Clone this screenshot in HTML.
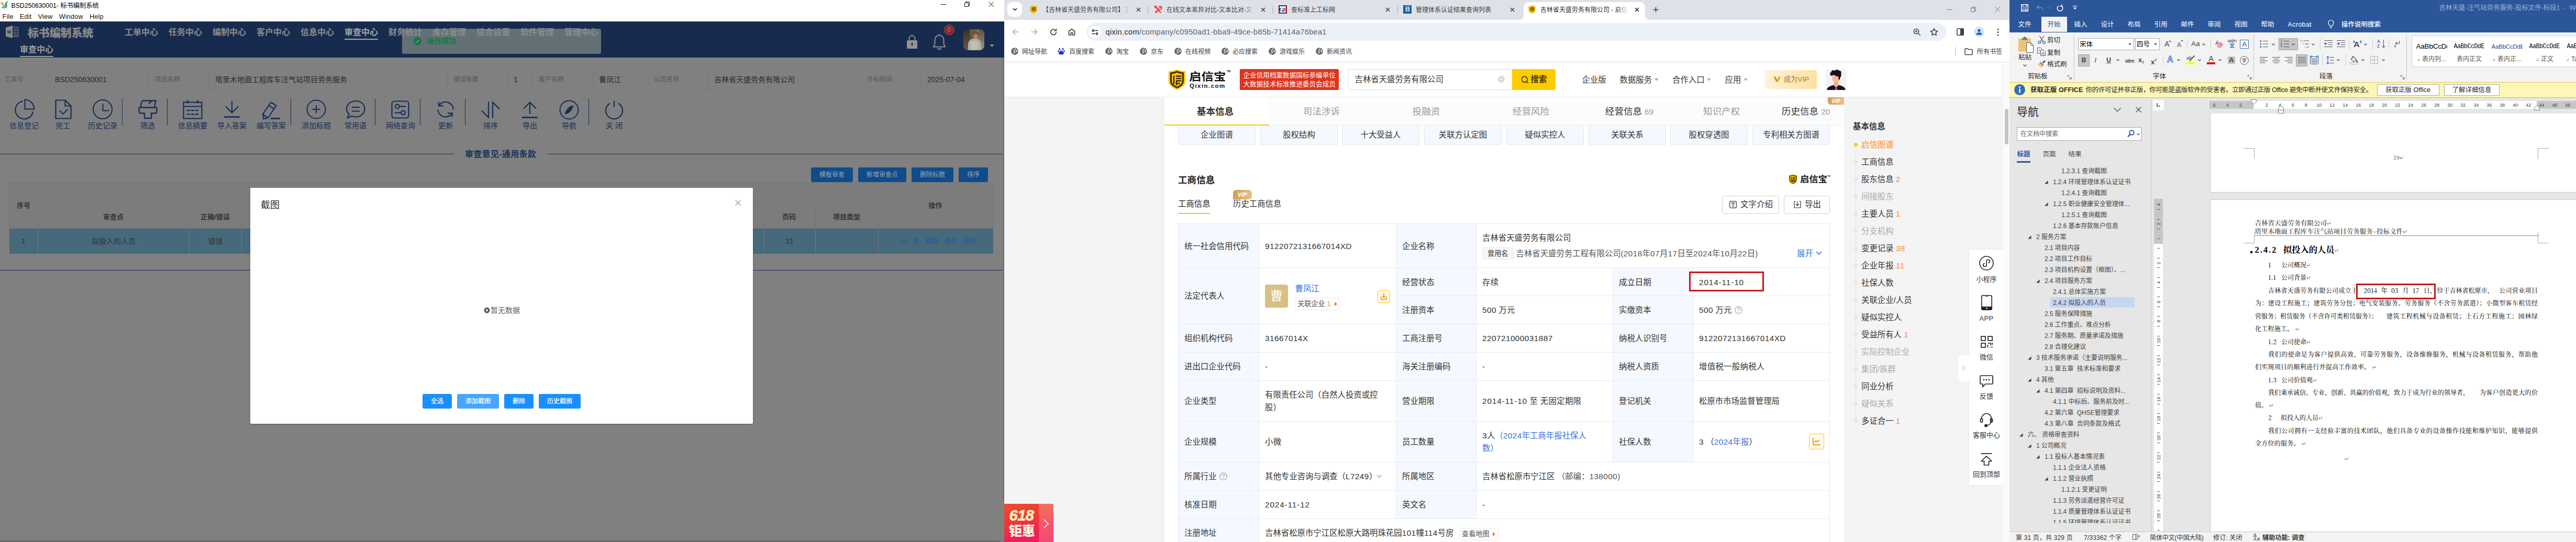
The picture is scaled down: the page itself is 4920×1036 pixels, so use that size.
<!DOCTYPE html>
<html lang="zh-CN">
<head>
<meta charset="utf-8">
<title>screen</title>
<style>
*{box-sizing:border-box;margin:0;padding:0}
html,body{width:4920px;height:1036px;overflow:hidden;background:#fff}
body{position:relative;font-family:"Liberation Sans","Noto Sans CJK SC",sans-serif;font-size:12px;color:#000}
.a{position:absolute}
.t{position:absolute;white-space:nowrap;line-height:1}
.c{text-align:center}
.b{font-weight:bold}
svg{position:absolute;overflow:visible}
/* ---- left app ---- */
.nv{position:absolute;top:53px;font-size:16px;font-weight:bold;color:#8c8c8c;line-height:18px;white-space:nowrap}
.ic{position:absolute;top:231px;width:80px;text-align:center;font-size:14px;line-height:18px;color:#172e58;white-space:nowrap}
.sp{position:absolute;top:189px;width:1px;height:50px;background:#172e58}
.il{position:absolute;top:131px;height:42px;line-height:42px;font-size:12px;color:#555;padding-left:9px;border-right:1px solid #777;white-space:nowrap}
.iv{position:absolute;top:131px;height:42px;line-height:42px;font-size:14px;color:#2a2a2a;padding-left:11px;border-right:1px solid #777;white-space:nowrap}
.bt{position:absolute;top:320px;height:28px;line-height:28px;border-radius:3px;background:#0e4c8c;color:#9aa4b0;font-size:12px;text-align:center;white-space:nowrap}
.th{position:absolute;font-size:13px;font-weight:bold;color:#333;text-align:center;white-space:nowrap}
.td{position:absolute;top:437px;height:48px;line-height:48px;font-size:14px;color:#313136;text-align:center;white-space:nowrap;background:#466a7b;border-right:1px solid #777}
.mb{position:absolute;top:753px;font-weight:500;height:28px;line-height:28px;border-radius:3px;background:#1890ff;color:#fff;font-size:12px;text-align:center;white-space:nowrap}
/* ---- browser ---- */
.tb{position:absolute;top:11px;font-size:12px;line-height:16px;color:#3c4043;white-space:nowrap;overflow:hidden}
.tx{position:absolute;top:13.500px}
.bk{position:absolute;top:91px;font-size:12px;line-height:16px;color:#3c4043;white-space:nowrap}
.gl{position:absolute;top:91px}
/* ---- page ---- */
.nl{position:absolute;top:142px;font-size:15.400px;line-height:22px;color:#333;white-space:nowrap}
.pt{position:absolute;top:199px;font-size:17.600px;line-height:28px;color:#999;white-space:nowrap;text-align:center;width:200px}
.pt i{font-style:normal;font-size:15.400px;color:#999}
.sb{position:absolute;top:240px;width:148px;height:37px;background:#f5f9ff;border:1px solid #dfe8f3;border-top:0;border-radius:0 0 4px 4px;font-size:15.400px;line-height:36.500px;color:#333;text-align:center;white-space:nowrap}
.cl{position:absolute;background:#f5f9ff;font-size:15.400px;color:#333;white-space:nowrap;padding-left:11px;border-right:1px solid #e3ebf5;border-bottom:1px solid #e3ebf5}
.cv{position:absolute;background:#fff;font-size:15.400px;color:#333;white-space:nowrap;padding-left:11px;border-right:1px solid #e3ebf5;border-bottom:1px solid #e3ebf5;letter-spacing:.3px}
.h54{height:54px;line-height:53px}
.si{position:absolute;left:3555px;margin-top:.5px;font-size:15.400px;line-height:22px;color:#333;white-space:nowrap}
.si b{font-weight:normal;color:#ff8a1f}
.si.g{color:#aaa}
.dt{position:absolute;left:3541px;width:7px;height:7px;border-radius:4px;background:#e6e6e6}
.fl{position:absolute;left:3761px;width:66px;text-align:center;font-size:13px;line-height:16px;color:#333;white-space:nowrap}
.n{letter-spacing:.42px}
.nd{letter-spacing:.84px}
.bl{color:#3870e0}
.tg{display:inline-block;height:23px;line-height:21px;border:1px solid #e8e8e8;border-radius:2px;font-size:13.200px;color:#555;padding:0 9px;vertical-align:middle;background:#fff}
/* ---- word ---- */
.wt{position:absolute;top:37.500px;font-size:12.500px;line-height:18px;color:#fff;white-space:nowrap}
.wl{position:absolute;font-size:12px;line-height:16px;color:#262626;white-space:nowrap}
.ws{position:absolute;top:66px;width:1px;height:86px;background:#c8c8c8}
.ws2{position:absolute;width:1px;height:22px;background:#d0d0d0}
.cr{position:absolute}
.nt{position:absolute;font-size:12px;line-height:16px;color:#444;white-space:nowrap;letter-spacing:-.1px}
.tr{position:absolute}
.dl{position:absolute;font-family:"Noto Serif CJK SC","Liberation Serif",serif;font-size:12px;line-height:16px;color:#000;white-space:nowrap}
.dj{position:absolute;left:4307px;width:540px;font-family:"Noto Serif CJK SC","Liberation Serif",serif;font-size:12px;line-height:16px;color:#000;text-align:justify;text-align-last:justify;white-space:nowrap}
.pm{color:#8a8a8a;font-family:"DejaVu Sans","Liberation Sans",sans-serif;font-size:11px;line-height:1;letter-spacing:0}
.rn{position:absolute;top:194.500px;font-size:9px;line-height:12px;color:#444;width:20px;text-align:center;font-family:"Liberation Sans",sans-serif}
.vr{position:absolute;left:4115px;width:16px;height:12px;font-size:9px;line-height:12px;color:#444;text-align:center;transform:rotate(-90deg);font-family:"Liberation Sans",sans-serif}
.st{position:absolute;top:1020px;letter-spacing:.15px;font-size:12px;line-height:16px;color:#333;white-space:nowrap}
.sg{position:absolute;top:81px;font-size:12px;line-height:16px;color:#000;white-space:nowrap;overflow:hidden;width:59px}
.sgl{position:absolute;top:105px;font-size:12px;line-height:16px;color:#555;white-space:nowrap;width:72px;text-align:center}
</style>
</head>
<body>
<!-- ================= LEFT APP ================= -->
<div class="a" style="left:0;top:0;width:1918px;height:1036px;background:#808080"></div>
<div class="a" style="left:0;top:0;width:1918px;height:41px;background:#fff"></div>
<svg style="left:0;top:2px" width="17" height="16" viewBox="0 0 17 16"><path d="M0 3.500C2 2 5.500 2.200 8 4 5.500 4 3 4.800 1 6.200 2.500 5 3 4.200 0 3.500z" fill="#f08a24"/><path d="M15.500 0c-2 .8-4.500 1.800-5.700 4.200C8.500 7 10.500 8 9.500 10.500c-.8 2-3.500 2.800-7.500 1.300 2.800 2.700 8.500 3 11-.3 1.800-2.500-.3-4 .2-6.500C13.600 3 14.800 1.500 15.500 0z" fill="#2e9e4e"/><path d="M3 6.500c2.500-.8 4.500.3 4.500 2.500 0 1.500-1.300 2.300-3 2.300" fill="none" stroke="#2e9e4e" stroke-width="1.600"/></svg>
<div class="t" style="left:21.500px;top:2.500px;font-size:12.300px;line-height:16px;letter-spacing:-.05px">BSD250630001- 标书编制系统</div>
<div class="t" style="left:4.500px;top:24px;font-size:12.500px;line-height:16px;color:#111;word-spacing:8.500px;letter-spacing:.25px">File Edit View Window Help</div>
<svg style="left:1797px;top:3px" width="110" height="12" viewBox="0 0 110 12"><path d="M0 5.500h10M45.500 2.500h7v7h-7zM47.500 2.500v-2h7v7h-2M91.500.5l9.500 9.500M101 .5l-9.500 9.500" fill="none" stroke="#111" stroke-width="1"/></svg>
<!-- navy header -->
<div class="a" style="left:0;top:41px;width:1918px;height:69px;background:#172b4f"></div>
<svg style="left:10px;top:49px" width="26" height="24" viewBox="0 0 26 24"><path d="M1 3.500L14 0v24L1 20.500z" fill="#8a8a8a"/><path d="M14 3h10.500v18H14" fill="none" stroke="#8a8a8a" stroke-width="1.200"/><path d="M15.500 6.500h7M15.500 9.500h7M15.500 12.500h7M15.500 15.500h7M15.500 18.500h7" stroke="#8a8a8a" stroke-width="1"/></svg>
<div class="t b" style="left:8.500px;top:57px;width:18px;font-size:8.500px;color:#172b4f;text-align:center">W</div>
<div class="t b" style="left:53px;top:50px;font-size:21px;line-height:26px;color:#8a8a8a;letter-spacing:-.15px;text-shadow:0 0 1px #8a8a8a">标书编制系统</div>
<div class="nv" style="left:238px">工单中心</div>
<div class="nv" style="left:322px">任务中心</div>
<div class="nv" style="left:406px">编制中心</div>
<div class="nv" style="left:490px">客户中心</div>
<div class="nv" style="left:574px">信息中心</div>
<div class="nv" style="left:658px;color:#a4a4a4">审查中心</div>
<div class="a" style="left:658px;top:74px;width:64px;height:2px;background:#a4a4a4"></div>
<div class="nv" style="left:742px">财务统计</div>
<div class="nv" style="left:826px">库存管理</div>
<div class="nv" style="left:910px">综合设置</div>
<div class="nv" style="left:994px">软件管理</div>
<div class="nv" style="left:1078px">管理中心</div>
<div class="nv" style="left:38px;top:86px;color:#9c9c9c">审查中心</div>
<div class="a" style="left:38px;top:107px;width:64px;height:2px;background:#9c9c9c"></div>
<!-- toast -->
<div class="a" style="left:768px;top:54.500px;width:380px;height:48px;border-radius:4px;background:rgba(132,142,135,.7)"></div>
<svg style="left:790px;top:71px" width="15" height="15" viewBox="0 0 15 15"><circle cx="7.500" cy="7.500" r="7.500" fill="#12773f"/><path d="M4 7.700l2.500 2.500L11 5.500" fill="none" stroke="#8a9a8c" stroke-width="1.600"/></svg>
<div class="t b" style="left:815px;top:71px;font-size:14px;line-height:15px;color:#167a44">操作成功</div>
<!-- header right icons -->
<svg style="left:1731px;top:66px" width="22" height="28" viewBox="0 0 22 28"><path d="M5.500 11V7.500a5.500 5.500 0 0111 0V11" fill="none" stroke="#8c8c8c" stroke-width="2"/><rect x="1" y="11" width="20" height="16" rx="2" fill="#929292"/><circle cx="11" cy="17.500" r="1.800" fill="#172b4f"/><rect x="10.300" y="18" width="1.400" height="4" fill="#172b4f"/></svg>
<svg style="left:1780px;top:64px" width="28" height="32" viewBox="0 0 28 32"><path d="M14 3.500c-5 0-8.500 3.800-8.500 9v8L2.500 25.500h23L22.500 20.500v-8c0-5.200-3.500-9-8.500-9z" fill="none" stroke="#8c8c8c" stroke-width="2" stroke-linejoin="round"/><path d="M11 27.500a3 3 0 006 0" fill="none" stroke="#8c8c8c" stroke-width="2"/><path d="M14 1v2.500" stroke="#8c8c8c" stroke-width="2"/></svg>
<div class="a" style="left:1802.500px;top:46.500px;width:20px;height:20px;border-radius:10px;background:#8c2428;border:1px solid #7a5a60"></div>
<div class="t c" style="left:1802.500px;top:49.500px;width:20px;font-size:12px;color:#a09090;line-height:14px">0</div>
<div class="a" style="left:1840px;top:56px;width:40px;height:40px;border-radius:9px;background:linear-gradient(90deg,#4a3d2c 0%,#5d5140 30%,#6f6656 60%,#8a8272 100%);overflow:hidden"><div class="a" style="left:0;top:0;width:12px;height:40px;background:linear-gradient(180deg,#3a2f22,#6a5a44)"></div><div class="a" style="left:30px;top:0;width:10px;height:40px;background:linear-gradient(180deg,#5a5548,#9a9484)"></div><div class="a" style="left:15px;top:3px;width:15px;height:15px;border-radius:8px;background:#7a4f30"></div><div class="a" style="left:19px;top:9px;width:9px;height:10px;border-radius:5px;background:#a38573"></div><div class="a" style="left:9px;top:18px;width:25px;height:24px;border-radius:10px 10px 2px 2px;background:#b3aea2"></div><div class="a" style="left:14px;top:22px;width:14px;height:18px;border-radius:6px;background:#c2beb3"></div></div>
<svg style="left:1890px;top:85px" width="9" height="5" viewBox="0 0 9 5"><path d="M0 0h9L4.500 5z" fill="#8c8c8c"/></svg>
<!-- info row -->
<div class="a" style="left:0;top:130px;width:1916px;height:43px;border-top:1px solid #777;border-bottom:1px solid #777"></div>
<div class="il" style="left:0;width:94px">工单号</div>
<div class="iv" style="left:94px;width:191px">BSD250630001</div>
<div class="il" style="left:285px;width:115px;padding-left:11px">项目名称</div>
<div class="iv" style="left:400px;width:455px">塔里木地面工程库车注气站项目劳务服务</div>
<div class="il" style="left:855px;width:115px;padding-left:11px">错误条数</div>
<div class="iv" style="left:970px;width:48px">1</div>
<div class="il" style="left:1018px;width:115px;padding-left:11px">客户名称</div>
<div class="iv" style="left:1133px;width:105px">曹凤江</div>
<div class="il" style="left:1238px;width:115px;padding-left:11px">公司名称</div>
<div class="iv" style="left:1353px;width:292px">吉林省天盛劳务有限公司</div>
<div class="il" style="left:1645px;width:115px;padding-left:11px">开标时间</div>
<div class="iv" style="left:1760px;width:156px">2025-07-04</div>
<!-- toolbar icons -->

<svg style="left:26px;top:188px" width="40" height="42" viewBox="0 0 40 42" fill="none" stroke="#172e58" stroke-width="2.200"><path d="M18 5.500A17 17 0 1037 25.500"/><path d="M21.500 2.500v18h17.500A17.500 17.500 0 0021.500 2.500z" stroke-linejoin="miter"/></svg>
<div class="ic" style="left:6px">信息登记</div>
<svg style="left:105px;top:190px" width="32" height="38" viewBox="0 0 32 38" fill="none" stroke="#172e58" stroke-width="2.200"><path d="M1.500 1.500h18l11 11v24h-29z"/><path d="M19.500 1.500v11h11"/><path d="M9 21.500l6.500 6.500 8.500-9"/></svg>
<div class="ic" style="left:80px">完工</div>
<svg style="left:177px;top:190px" width="38" height="38" viewBox="0 0 38 38" fill="none" stroke="#172e58" stroke-width="2"><circle cx="19" cy="19" r="18"/><path d="M19.500 8v13.500h12"/></svg>
<div class="ic" style="left:156px">历史记录</div>
<div class="sp" style="left:233px"></div>
<svg style="left:263px;top:191px" width="38" height="37" viewBox="0 0 38 37" fill="none" stroke="#172e58" stroke-width="2.400" stroke-linejoin="round"><path d="M6 14c0-6 1.500-11.500 4-12.500h25c-1.500 2-2.500 7-2.500 12.500"/><path d="M21 7.500l5.500-5.500"/><path d="M3 14.500h32c1 0 1.500.5 1.500 1.500v5.500c0 2.500-1.500 4-4 4h-6.500v9.500h-13v-9.500h-6.500c-2.500 0-4-1.500-4-4V16c0-1 .5-1.500 1.500-1.500z"/></svg>
<div class="ic" style="left:242px">筛选</div>
<div class="sp" style="left:319px"></div>
<svg style="left:349px;top:190px" width="38" height="38" viewBox="0 0 38 38" fill="none" stroke="#172e58" stroke-width="2.200"><rect x="1.500" y="5.500" width="35" height="31"/><path d="M1.500 13.500h35M9.500 1v7M28.500 1v7"/><path d="M9 21h4M17 21h4M25 21h4M9 28.500h4M17 28.500h4M25 28.500h4" stroke-width="2.600" stroke-linecap="round"/></svg>
<div class="ic" style="left:328px">信息摘要</div>
<svg style="left:427px;top:192px" width="32" height="34" viewBox="0 0 32 34" fill="none" stroke="#172e58" stroke-width="2.200"><path d="M16 1v22M4 11.500l12 12 12-12"/><path d="M1 31.500h30" stroke-width="2.800"/></svg>
<div class="ic" style="left:403px">导入答案</div>
<svg style="left:500px;top:193px" width="36" height="36" viewBox="0 0 36 36" fill="none" stroke="#172e58" stroke-width="2.200" stroke-linejoin="round"><path d="M17.500 2.500l10 6.500-15.500 23-9 2.500-1-9.500z"/><path d="M13.500 8.500l10 6.500M2.500 26l8.500 6"/><path d="M17 33.500h18" stroke-width="2.800"/></svg>
<div class="ic" style="left:478px">编写答案</div>
<div class="sp" style="left:555px"></div>
<svg style="left:585px;top:190px" width="38" height="38" viewBox="0 0 38 38" fill="none" stroke="#172e58" stroke-width="2"><circle cx="19" cy="19" r="17.500"/><path d="M19 11.500v15M11.500 19h15" stroke-width="2.200"/></svg>
<div class="ic" style="left:564px">添加标题</div>
<svg style="left:660px;top:191px" width="38" height="37" viewBox="0 0 38 37" fill="none" stroke="#172e58" stroke-width="2.200" stroke-linejoin="round"><path d="M19.500 2C10 2 2 8.500 2 17c0 4 1.800 7.500 4.600 10.200L3.500 34.500l8.500-3.400c2.300.9 4.800 1.400 7.500 1.400 9.500 0 17-6.800 17-15.500S29 2 19.500 2z"/><path d="M12 14h15M12 21.500h15"/></svg>
<div class="ic" style="left:639px">常用语</div>
<div class="sp" style="left:716px"></div>
<svg style="left:747px;top:192px" width="35" height="35" viewBox="0 0 35 35" fill="none" stroke="#172e58" stroke-width="2.200"><rect x="1.500" y="1.500" width="32" height="32" rx="4.500"/><circle cx="12" cy="11.500" r="3.800"/><path d="M16 11.500h12"/><circle cx="23" cy="23.500" r="3.800"/><path d="M7 23.500h12"/></svg>
<div class="ic" style="left:725px">网络查询</div>
<div class="sp" style="left:802px"></div>
<svg style="left:834px;top:192px" width="34" height="34" viewBox="0 0 34 34" fill="none" stroke="#172e58" stroke-width="2.200"><path d="M4 10.400A15 15 0 0132 17.400"/><path d="M4 2.600v7.800h8.600"/><path d="M2 17.400A15 15 0 0029.700 24.400"/><path d="M29.700 32V24.400h-8.700"/></svg>
<div class="ic" style="left:811px">更新</div>
<div class="sp" style="left:888px"></div>
<svg style="left:919px;top:193px" width="36" height="34" viewBox="0 0 36 34" fill="none" stroke="#172e58" stroke-width="2.200"><path d="M14 1.500v30L1 18.500"/><path d="M22 32.500v-30l13 13"/></svg>
<div class="ic" style="left:897px">排序</div>
<svg style="left:996px;top:194px" width="32" height="33" viewBox="0 0 32 33" fill="none" stroke="#172e58" stroke-width="2.200"><path d="M16 24V2M4 13.500l12-12 12 12"/><path d="M1 30.500h30" stroke-width="2.800"/></svg>
<div class="ic" style="left:972px">导出</div>
<svg style="left:1068px;top:191px" width="38" height="38" viewBox="0 0 38 38" fill="none" stroke="#172e58" stroke-width="2"><circle cx="19" cy="19" r="17.500"/><path d="M27.500 10.500c-1 5-4.500 10.500-8 13.500-3 2.200-6.500 3-9 3.500 1-5 4.500-10.500 8-13.500 3-2.200 6.500-3 9-3.500z" fill="#172e58" stroke="none"/></svg>
<div class="ic" style="left:1047px">导航</div>
<div class="sp" style="left:1124px"></div>
<svg style="left:1155px;top:192px" width="36" height="34" viewBox="0 0 36 34" fill="none" stroke="#172e58" stroke-width="2.200"><path d="M10 5.500A16 16 0 1026 5.500"/><path d="M18 1v11.500"/></svg>
<div class="ic" style="left:1133px">关 闭</div>

<!-- divider -->
<div class="a" style="left:0;top:294px;width:868px;height:1px;background:#1d3760"></div>
<div class="a" style="left:1046px;top:294px;width:870px;height:1px;background:#1d3760"></div>
<div class="t b" style="left:888px;top:285px;font-size:16px;line-height:20px;color:#17305a;letter-spacing:.3px">审查意见-通用条款</div>
<!-- buttons -->
<div class="bt" style="left:1549px;width:80px">模板审查</div>
<div class="bt" style="left:1639px;width:92px">新增审查点</div>
<div class="bt" style="left:1741px;width:80px">删除标题</div>
<div class="bt" style="left:1831px;width:56px">排序</div>
<!-- table -->
<div class="a" style="left:18px;top:348px;width:1879px;height:89px;background:#7c7c7d;border:1px solid #757576"></div>
<div class="a" style="left:72px;top:348px;width:1px;height:89px;background:#747577"></div>
<div class="a" style="left:72px;top:392px;width:1605px;height:1px;background:#747577"></div>
<div class="a" style="left:361px;top:392px;width:1px;height:45px;background:#747577"></div>
<div class="a" style="left:461px;top:392px;width:1px;height:45px;background:#747577"></div>
<div class="a" style="left:1457px;top:392px;width:1px;height:45px;background:#747577"></div>
<div class="a" style="left:1557px;top:392px;width:1px;height:45px;background:#747577"></div>
<div class="a" style="left:1677px;top:348px;width:1px;height:89px;background:#747577"></div>
<div class="th" style="left:18px;top:383px;width:54px;line-height:20px">序号</div>
<div class="th" style="left:72px;top:405px;width:289px;line-height:20px">审查点</div>
<div class="th" style="left:361px;top:405px;width:100px;line-height:20px">正确/错误</div>
<div class="th" style="left:1457px;top:405px;width:100px;line-height:20px">页码</div>
<div class="th" style="left:1557px;top:405px;width:120px;line-height:20px">项目类型</div>
<div class="th" style="left:1677px;top:383px;width:219px;line-height:20px">操作</div>
<div class="a" style="left:18px;top:437px;width:1879px;height:48px;background:#466a7b"></div>
<div class="td" style="left:18px;width:55px">1</div>
<div class="td" style="left:73px;width:289px">拟投入的人员</div>
<div class="td" style="left:362px;width:100px">错误</div>
<div class="td" style="left:1458px;width:100px;border-left:1px solid #777">31</div>
<div class="td" style="left:1558px;width:120px"></div>
<div class="td" style="left:1678px;width:219px;border-right:0;color:#1f5aa0;font-size:12px;word-spacing:8.700px;text-align:left;padding-left:42px">对 错 截图 修改 删除</div>
<div class="a" style="left:0;top:516px;width:1916px;height:1px;background:#1d3760"></div>
<!-- scrollbars -->
<div class="a" style="left:1915px;top:110px;width:3px;height:848px;background:linear-gradient(90deg,#7a7a7a,#666)"></div>
<div class="a" style="left:0;top:1033px;width:1911px;height:3px;background:#686868;border-radius:0 3px 0 0"></div>
<!-- modal -->
<div class="a" style="left:478px;top:359px;width:960px;height:451px;background:#fff;border-radius:2px;box-shadow:0 1px 3px rgba(0,0,0,.3)"></div>
<div class="t" style="left:498px;top:380px;font-size:18px;line-height:24px;color:#303133">截图</div>
<svg style="left:1404px;top:382px" width="11" height="11" viewBox="0 0 11 11"><path d="M.5.5l10 10M10.500.5l-10 10" stroke="#909399" stroke-width="1.100" fill="none"/></svg>
<svg style="left:924px;top:587px" width="12" height="12" viewBox="0 0 12 12"><circle cx="6" cy="6" r="5.500" fill="#555"/><path d="M4 4l4 4M8 4l-4 4" stroke="#fff" stroke-width="1.200"/></svg>
<div class="t" style="left:937px;top:585px;font-size:14px;line-height:16px;color:#5e6066">暂无数据</div>
<div class="mb" style="left:807px;width:56px">全选</div>
<div class="mb" style="left:873px;width:80px;background:#46a6ff">添加截图</div>
<div class="mb" style="left:963px;width:56px">删除</div>
<div class="mb" style="left:1029px;width:80px">历史截图</div>
<!-- ================= BROWSER CHROME ================= -->
<div class="a" style="left:1918px;top:0;width:1920px;height:1036px;background:#f4f4f4"></div>
<div class="a" style="left:1918px;top:0;width:1920px;height:38px;background:#dee1e7"></div>
<div class="a" style="left:1918px;top:38px;width:1920px;height:81px;background:#fff;border-radius:8px 8px 0 0;border-bottom:1px solid #dadce0"></div>
<div class="a" style="left:1924px;top:4px;width:28px;height:28px;border-radius:9px;background:#fff"></div>
<svg style="left:1933.500px;top:15px" width="9" height="6" viewBox="0 0 9 6"><path d="M1 1l3.500 3.500L8 1" fill="none" stroke="#1f1f1f" stroke-width="1.700"/></svg>
<!-- active tab -->
<div class="a" style="left:2910px;top:4px;width:232px;height:34px;background:#fff;border-radius:9px 9px 0 0"></div>
<svg style="left:2902px;top:30px" width="8" height="8" viewBox="0 0 8 8"><path d="M8 0v8H0A8 8 0 008 0z" fill="#fff"/></svg>
<svg style="left:3142px;top:30px" width="8" height="8" viewBox="0 0 8 8"><path d="M0 0v8h8A8 8 0 010 0z" fill="#fff"/></svg>
<!-- tab 1 -->
<svg style="left:1967px;top:10px" width="14" height="16" viewBox="0 0 14 16"><path d="M7 .5C5 1.800 3 2.300.8 2.300V9c0 3.200 2.500 5.300 6.200 6.600 3.700-1.300 6.200-3.400 6.200-6.600V2.300C11 2.300 9 1.800 7 .5z" fill="#f7c40f" stroke="#d9a400" stroke-width=".6"/><path d="M4.200 4.200v6.300M6 4.300h4.300v6.500H6zM7 6.200h3M7 8h3" fill="none" stroke="#3a2a00" stroke-width="1"/></svg>
<div class="tb" style="left:1991px;width:168px;-webkit-mask-image:linear-gradient(90deg,#000 148px,transparent 167px)">【吉林省天盛劳务有限公司】了解</div>
<svg class="tx" style="left:2170px" width="9" height="9" viewBox="0 0 9 9"><path d="M1 1l7 7M8 1l-7 7" stroke="#3c4043" stroke-width="1.500" fill="none"/></svg>
<div class="a" style="left:2192px;top:11px;width:2px;height:15px;background:#c3c6cc;border-radius:1px"></div>
<!-- tab 2 -->
<svg style="left:2204px;top:10px" width="17" height="16" viewBox="0 0 17 16"><path d="M2 2.500l4.500 4.500M12.500 13.500L8.500 9.500" stroke="#e03a2f" stroke-width="2.400" stroke-linecap="round" fill="none"/><path d="M13.500 2a3.500 3.500 0 00-4.500 4.500L2.500 13l1.500 1.500L10.500 8A3.500 3.500 0 0015 3.500l-2 2-1.500-1.500z" fill="none" stroke="#e03a2f" stroke-width="1.300"/><circle cx="3" cy="3" r="1.800" fill="none" stroke="#e03a2f" stroke-width="1.200"/></svg>
<div class="tb" style="left:2228px;width:168px;-webkit-mask-image:linear-gradient(90deg,#000 148px,transparent 167px)">在线文本差异对比-文本比对-文本</div>
<svg class="tx" style="left:2407.500px" width="9" height="9" viewBox="0 0 9 9"><path d="M1 1l7 7M8 1l-7 7" stroke="#3c4043" stroke-width="1.500" fill="none"/></svg>
<div class="a" style="left:2430px;top:11px;width:2px;height:15px;background:#c3c6cc;border-radius:1px"></div>
<!-- tab 3 -->
<div class="a" style="left:2442px;top:10px;width:16px;height:16px;background:#fff;border:1px solid #8b1a1a;outline:1px solid #1b2a7a;outline-offset:-2px"></div>
<div class="t b" style="left:2442px;top:12px;width:16px;text-align:center;font-size:11px;line-height:12px;color:#1b2a7a;letter-spacing:-1px;font-family:'Liberation Serif',serif">G<span style="color:#b01c1c">B</span></div>
<div class="tb" style="left:2466px;width:168px">查标准上工标网</div>
<svg class="tx" style="left:2645.500px" width="9" height="9" viewBox="0 0 9 9"><path d="M1 1l7 7M8 1l-7 7" stroke="#3c4043" stroke-width="1.500" fill="none"/></svg>
<div class="a" style="left:2668px;top:11px;width:2px;height:15px;background:#c3c6cc;border-radius:1px"></div>
<!-- tab 4 -->
<div class="a" style="left:2680px;top:10px;width:16px;height:16px;background:#1560a8"></div>
<div class="t b" style="left:2680px;top:12px;width:16px;text-align:center;font-size:10px;line-height:12px;color:#fff;letter-spacing:-.5px">日</div>
<div class="tb" style="left:2704px;width:168px">管理体系认证结果查询列表</div>
<svg class="tx" style="left:2883.500px" width="9" height="9" viewBox="0 0 9 9"><path d="M1 1l7 7M8 1l-7 7" stroke="#3c4043" stroke-width="1.500" fill="none"/></svg>
<!-- tab 5 -->
<svg style="left:2919px;top:10px" width="14" height="16" viewBox="0 0 14 16"><path d="M7 .5C5 1.800 3 2.300.8 2.300V9c0 3.200 2.500 5.300 6.200 6.600 3.700-1.300 6.200-3.400 6.200-6.600V2.300C11 2.300 9 1.800 7 .5z" fill="#f7c40f" stroke="#d9a400" stroke-width=".6"/><path d="M4.200 4.200v6.300M6 4.300h4.300v6.500H6zM7 6.200h3M7 8h3" fill="none" stroke="#3a2a00" stroke-width="1"/></svg>
<div class="tb" style="left:2942px;width:168px;color:#1f1f1f;-webkit-mask-image:linear-gradient(90deg,#000 148px,transparent 167px)">吉林省天盛劳务有限公司 - 启信宝</div>
<svg class="tx" style="left:3121.500px" width="9" height="9" viewBox="0 0 9 9"><path d="M1 1l7 7M8 1l-7 7" stroke="#1f1f1f" stroke-width="1.500" fill="none"/></svg>
<svg style="left:3156.500px;top:13px" width="11" height="11" viewBox="0 0 11 11"><path d="M5.500.5v10M.5 5.500h10" stroke="#3c4043" stroke-width="1.500" fill="none"/></svg>
<!-- window controls -->
<svg style="left:3718px;top:12px" width="104" height="12" viewBox="0 0 104 12" fill="none" stroke="#70757a" stroke-width="1"><path d="M0 6.500h10M46.500 3.500h7v7h-7zM48.500 3.500v-2h7v7h-2M92.500 1l9.500 9.500M102 1l-9.500 9.500"/></svg>
<!-- toolbar -->
<svg style="left:1933px;top:55px" width="13" height="12" viewBox="0 0 13 12" fill="none" stroke="#a9adb3" stroke-width="1.600"><path d="M12.500 6H1.500M6.500 1l-5 5 5 5"/></svg>
<svg style="left:1969px;top:55px" width="13" height="12" viewBox="0 0 13 12" fill="none" stroke="#a9adb3" stroke-width="1.600"><path d="M.5 6h11M6.500 1l5 5-5 5"/></svg>
<svg style="left:2005px;top:54px" width="14" height="14" viewBox="0 0 14 14" fill="none" stroke="#3c4043" stroke-width="1.700"><path d="M12.300 7.300A5.300 5.300 0 1 1 10.700 3.500"/><path d="M12.400 .8v4h-4" stroke-width="1.600"/></svg>
<svg style="left:2040px;top:54px" width="14" height="14" viewBox="0 0 14 14" fill="none" stroke="#3c4043" stroke-width="1.700"><path d="M1.500 13V5.500l5.500-4 5.500 4V13H8.500V8.500h-3V13z"/></svg>
<div class="a" style="left:2075px;top:44px;width:1643px;height:34px;border-radius:17px;background:#ecf0f8"></div>
<div class="a" style="left:2079px;top:49px;width:24px;height:24px;border-radius:12px;background:#fff"></div>
<svg style="left:2085px;top:56px" width="13" height="11" viewBox="0 0 13 11" fill="none" stroke="#1f1f1f" stroke-width="1.500"><circle cx="3" cy="2.500" r="1.700"/><path d="M6.500 2.500h6M.5 8.500h6"/><circle cx="10" cy="8.500" r="1.700"/></svg>
<div class="t" style="left:2111.500px;top:52px;font-size:14.500px;line-height:18px;color:#5f6368;letter-spacing:.34px"><span style="color:#2a2a2a">qixin.com</span>/company/c0950ad1-bba9-49ce-b85b-71414a76bea1</div>
<svg style="left:3654px;top:54px" width="15" height="15" viewBox="0 0 15 15" fill="none" stroke="#3c4043" stroke-width="1.600"><circle cx="6" cy="6" r="4.700"/><path d="M9.500 9.500l4.500 4.500M6 3.800v4.400M3.800 6h4.400" stroke-width="1.400"/></svg>
<svg style="left:3686px;top:53px" width="16" height="16" viewBox="0 0 16 16" fill="none" stroke="#3c4043" stroke-width="1.500" stroke-linejoin="round"><path d="M8 1.500l2 4.400 4.700.5-3.500 3.200 1 4.700L8 11.900l-4.200 2.400 1-4.700L1.300 6.400 6 5.900z"/></svg>
<svg style="left:3737px;top:54px" width="14" height="14" viewBox="0 0 14 14"><rect x=".8" y=".8" width="12.400" height="12.400" rx="1.500" fill="none" stroke="#3c4043" stroke-width="1.600"/><rect x="7" y="1" width="6" height="12" fill="#3c4043"/></svg>
<div class="a" style="left:3770px;top:51px;width:20px;height:20px;border-radius:10px;background:#d3e3fd"></div>
<svg style="left:3774px;top:55px" width="12" height="12" viewBox="0 0 12 12" fill="#0b57d0"><circle cx="6" cy="3.300" r="2.600"/><path d="M.5 11.500c0-3 2.500-4.300 5.500-4.300s5.500 1.300 5.500 4.300z"/></svg>
<svg style="left:3814px;top:54px" width="4" height="15" viewBox="0 0 4 15" fill="#3c4043"><circle cx="2" cy="2" r="1.500"/><circle cx="2" cy="7.500" r="1.500"/><circle cx="2" cy="13" r="1.500"/></svg>
<!-- bookmarks -->
<svg class="gl" style="left:1931px" width="14" height="14" viewBox="0 0 14 14"><circle cx="7" cy="7" r="6.800" fill="#5f6368"/><path d="M7.500 1.500c1 1 1 2-.5 2.500s-2 1-2 2 1 1 2 1.500 1.500 1.500 0 2-2 1.500-3 1.500M12.500 5c-1.500 0-2.500.5-2.500 1.500s1 1.500 2 2.500" fill="none" stroke="#fff" stroke-width="1.300"/></svg><div class="bk" style="left:1952px">网址导航</div>
<svg class="gl" style="left:2020px" width="14" height="14" viewBox="0 0 14 14" fill="#2932e1"><ellipse cx="3.800" cy="2.800" rx="1.500" ry="2"/><ellipse cx="10.200" cy="2.800" rx="1.500" ry="2"/><ellipse cx="1.600" cy="6.800" rx="1.400" ry="1.900"/><ellipse cx="12.400" cy="6.800" rx="1.400" ry="1.900"/><path d="M7 5.500c2 0 3 2 4.500 3.800 1 1.500.3 4-2 4-1 0-1.500-.4-2.500-.4s-1.500.4-2.500.4c-2.300 0-3-2.500-2-4C4 7.500 5 5.500 7 5.500z"/></svg><div class="bk" style="left:2042px">百度搜索</div>
<svg class="gl" style="left:2111px" width="14" height="14" viewBox="0 0 14 14"><circle cx="7" cy="7" r="6.800" fill="#5f6368"/><path d="M7.500 1.500c1 1 1 2-.5 2.500s-2 1-2 2 1 1 2 1.500 1.500 1.500 0 2-2 1.500-3 1.500M12.500 5c-1.500 0-2.500.5-2.500 1.500s1 1.500 2 2.500" fill="none" stroke="#fff" stroke-width="1.300"/></svg><div class="bk" style="left:2132px">淘宝</div>
<svg class="gl" style="left:2177px" width="14" height="14" viewBox="0 0 14 14"><circle cx="7" cy="7" r="6.800" fill="#5f6368"/><path d="M7.500 1.500c1 1 1 2-.5 2.500s-2 1-2 2 1 1 2 1.500 1.500 1.500 0 2-2 1.500-3 1.500M12.500 5c-1.500 0-2.500.5-2.500 1.500s1 1.500 2 2.500" fill="none" stroke="#fff" stroke-width="1.300"/></svg><div class="bk" style="left:2198px">京东</div>
<svg class="gl" style="left:2243px" width="14" height="14" viewBox="0 0 14 14"><circle cx="7" cy="7" r="6.800" fill="#5f6368"/><path d="M7.500 1.500c1 1 1 2-.5 2.500s-2 1-2 2 1 1 2 1.500 1.500 1.500 0 2-2 1.500-3 1.500M12.500 5c-1.500 0-2.500.5-2.500 1.500s1 1.500 2 2.500" fill="none" stroke="#fff" stroke-width="1.300"/></svg><div class="bk" style="left:2264px">在线视频</div>
<svg class="gl" style="left:2333px" width="14" height="14" viewBox="0 0 14 14"><circle cx="7" cy="7" r="6.800" fill="#5f6368"/><path d="M7.500 1.500c1 1 1 2-.5 2.500s-2 1-2 2 1 1 2 1.500 1.500 1.500 0 2-2 1.500-3 1.500M12.500 5c-1.500 0-2.500.5-2.500 1.500s1 1.500 2 2.500" fill="none" stroke="#fff" stroke-width="1.300"/></svg><div class="bk" style="left:2354px">必应搜索</div>
<svg class="gl" style="left:2423px" width="14" height="14" viewBox="0 0 14 14"><circle cx="7" cy="7" r="6.800" fill="#5f6368"/><path d="M7.500 1.500c1 1 1 2-.5 2.500s-2 1-2 2 1 1 2 1.500 1.500 1.500 0 2-2 1.500-3 1.500M12.500 5c-1.500 0-2.500.5-2.500 1.500s1 1.500 2 2.500" fill="none" stroke="#fff" stroke-width="1.300"/></svg><div class="bk" style="left:2444px">游戏娱乐</div>
<svg class="gl" style="left:2513px" width="14" height="14" viewBox="0 0 14 14"><circle cx="7" cy="7" r="6.800" fill="#5f6368"/><path d="M7.500 1.500c1 1 1 2-.5 2.500s-2 1-2 2 1 1 2 1.500 1.500 1.500 0 2-2 1.500-3 1.500M12.500 5c-1.500 0-2.500.5-2.500 1.500s1 1.500 2 2.500" fill="none" stroke="#fff" stroke-width="1.300"/></svg><div class="bk" style="left:2534px">新闻资讯</div>
<div class="a" style="left:3734px;top:90px;width:2px;height:16px;background:#c7d9f7;border-radius:1px"></div>
<svg style="left:3752px;top:92px" width="16" height="13" viewBox="0 0 16 13" fill="none" stroke="#3c4043" stroke-width="1.500" stroke-linejoin="round"><path d="M1 2.500v9a1 1 0 001 1h12a1 1 0 001-1v-8a1 1 0 00-1-1H7.500L6 1H2a1 1 0 00-1 1.500z"/></svg>
<div class="bk" style="left:3776px">所有书签</div>
<!-- ================= PAGE ================= -->
<div class="a" style="left:1918px;top:119px;width:1905px;height:67px;background:#fff;border-bottom:1px solid #e9e9e9"></div>
<div class="a" style="left:2224px;top:186px;width:1298px;height:850px;background:#fff"></div>
<!-- logo -->
<svg style="left:2231px;top:132px" width="34" height="40" viewBox="0 0 34 40"><path d="M17 .5C12 2.800 7 3.800 .8 4.300V23c0 7.500 6 12.500 16.200 16.700C27.200 35.500 33.200 30.500 33.200 23V4.300C27 3.800 22 2.800 17 .5z" fill="#ffc60a"/><path d="M17 5.200C13.500 6.800 9.500 7.700 5.500 8V23c0 5.500 4.500 9.300 11.500 12.300 7-3 11.500-6.800 11.500-12.300V8c-4-.3-8-1.200-11.500-2.800z" fill="none" stroke="#3d2a08" stroke-width="3"/><path d="M11 12.500v16M15 13.500h10.500M15 18h10.500M15 22.500h10.500M16 22.500v8.500M16 27.500h6.500" fill="none" stroke="#3d2a08" stroke-width="2.600"/></svg>
<div class="t b" style="left:2271px;top:134px;font-size:23.500px;line-height:26px;color:#111;letter-spacing:0;transform:scaleY(.88);transform-origin:0 50%">启信宝</div>
<div class="t b" style="left:2343px;top:133px;font-size:5px;line-height:6px;color:#111">TM</div>
<div class="t b" style="left:2272px;top:158px;font-size:11.500px;line-height:12px;color:#111;letter-spacing:1.450px;font-family:'Liberation Sans',sans-serif">Qixin.com</div>
<div class="a" style="left:2368px;top:132px;width:189px;height:40px;background:#e0321c;border-radius:2px"></div>
<div class="t" style="left:2374.500px;top:136px;font-size:12.600px;line-height:17px;color:#fff">企业信用档案数据国标参编单位<br>大数据技术标准推进委员会成员</div>
<!-- search -->
<div class="a" style="left:2575px;top:132px;width:314px;height:40px;background:#fff;border:1px solid #e0e0e0;border-right:0"></div>
<div class="t" style="left:2587.500px;top:141px;font-size:15.400px;line-height:22px;color:#333">吉林省天盛劳务有限公司</div>
<svg style="left:2861px;top:145px" width="13" height="13" viewBox="0 0 13 13"><circle cx="6.500" cy="6.500" r="6.500" fill="#d9d9d9"/><path d="M4.300 4.300l4.400 4.400M8.700 4.300l-4.400 4.400" stroke="#fff" stroke-width="1.200"/></svg>
<div class="a" style="left:2888px;top:132px;width:83px;height:40px;background:#ffcc00;border-radius:0 3px 3px 0"></div>
<svg style="left:2905px;top:145px" width="15" height="15" viewBox="0 0 15 15" fill="none" stroke="#4a3500" stroke-width="1.700"><circle cx="6.800" cy="6.800" r="5.500"/><path d="M11 11l2.500 2.500" stroke-linecap="round"/></svg>
<div class="t b" style="left:2923.500px;top:141px;font-size:15.400px;line-height:22px;color:#4a3500">搜索</div>
<div class="nl" style="left:3021.500px">企业版</div>
<div class="nl" style="left:3093.500px">数据服务</div><svg style="left:3160px;top:150px" width="8" height="5" viewBox="0 0 8 5"><path d="M0 0h8L4 4.500z" fill="#aaa"/></svg>
<div class="nl" style="left:3194px">合作入口</div><svg style="left:3260px;top:150px" width="8" height="5" viewBox="0 0 8 5"><path d="M0 0h8L4 4.500z" fill="#aaa"/></svg>
<div class="nl" style="left:3294.500px">应用</div><svg style="left:3330px;top:150px" width="8" height="5" viewBox="0 0 8 5"><path d="M0 0h8L4 4.500z" fill="#aaa"/></svg>
<div class="a" style="left:3371px;top:134px;width:99px;height:36px;border-radius:3px;background:linear-gradient(100deg,#fff4dc 0%,#ffe9bd 50%,#ffdf9e 100%)"></div>
<svg style="left:3387px;top:146px" width="14" height="11" viewBox="0 0 14 11"><path d="M0 .5h4.500l3 6.500L10.500.5H14L8.500 10.500H5.500z" fill="#d99c1c"/><path d="M0 .5h4L2.500 2.500z" fill="#f3c35a"/></svg>
<div class="t" style="left:3407px;top:143px;font-size:13.300px;line-height:18px;color:#a67c2e">成为VIP</div>
<div class="a" style="left:3487px;top:132px;width:40px;height:40px;border-radius:4px;background:#f2f3f7;overflow:hidden">
<svg style="left:0;top:0" width="40" height="40" viewBox="0 0 40 40"><path d="M2 40c1-5 5-7 10-8.500l4-1.500h8l4 1.500c5 1.500 9 3.500 10 8.500z" fill="#1c0f20"/><path d="M15 30l5 6 5-6z" fill="#fff"/><path d="M19 32.500h2l1 7.500h-4z" fill="#8c7a6b"/><path d="M16 24h8v6.500l-4 3-4-3z" fill="#f6a97f"/><ellipse cx="19.500" cy="17.500" rx="7" ry="9" fill="#fbb890"/><path d="M10.500 13c-3-2-3-6 0-7.500C11 2.500 15 1.500 17.500 3c2-2 6-2.500 8 0 3.500-.5 5.500 3 3.500 6 1.500 2 .5 5-1 6.500l-1.500 5.500-1.500-1-1-6c-3 .5-6-1-8.500-3.500-1.500 1.500-3 2.500-5 2.500z" fill="#1c0f20"/></svg></div>
<!-- tabs nav -->
<div class="a" style="left:2424px;top:186px;width:1098px;height:54px;background:#fcfcfc;border-bottom:1px solid #ececec"></div>
<div class="a" style="left:2224px;top:238px;width:200px;height:2px;background:#ffc60a"></div>
<div class="pt b" style="left:2221px;color:#333">基本信息</div>
<div class="pt" style="left:2424px">司法涉诉</div>
<div class="pt" style="left:2624px">投融资</div>
<div class="pt" style="left:2824px">经营风险</div>
<div class="pt" style="left:3012px;color:#333">经营信息 <i>69</i></div>
<div class="pt" style="left:3188px">知识产权</div>
<div class="pt" style="left:3349px;color:#333">历史信息 <i>20</i></div>
<div class="a" style="left:3491px;top:186px;width:31px;height:14px;border-radius:0 0 0 6px;background:linear-gradient(90deg,#cf9f56,#e6c286)"></div>
<div class="t b" style="left:3491px;top:187px;width:31px;text-align:center;font-size:10.500px;line-height:12px;color:#fff;font-style:italic;font-family:'Liberation Sans',sans-serif">VIP</div>
<!-- sub buttons -->
<div class="sb" style="left:2250px">企业图谱</div>
<div class="sb" style="left:2407px">股权结构</div>
<div class="sb" style="left:2563px">十大受益人</div>
<div class="sb" style="left:2720px">关联方认定图</div>
<div class="sb" style="left:2877px">疑似实控人</div>
<div class="sb" style="left:3034px">关联关系</div>
<div class="sb" style="left:3190px">股权穿透图</div>
<div class="sb" style="left:3347px">专利相关方图谱</div>
<!-- section head -->
<div class="t b" style="left:2250px;top:332px;font-size:17.600px;line-height:24px;color:#222">工商信息</div>
<svg style="left:3416px;top:332px" width="17" height="21" viewBox="0 0 34 40"><path d="M17 .8C12 3.500 7 4.800 1 4.800V22c0 8.500 6.500 14 16 17.500C26.500 36 33 30.500 33 22V4.800C27 4.800 22 3.500 17 .8z" fill="#ffc60a"/><path d="M17 4.500C13 6.500 9 7.500 4.500 7.700V22c0 7 5 11 12.500 14 7.500-3 12.500-7 12.500-14V7.700C25 7.500 21 6.500 17 4.500z" fill="none" stroke="#3d2a08" stroke-width="2.500"/><path d="M11 12v16M15 13h11M15 18h11M15 23h11M15 23v8M15 27.500h8v3.500" fill="none" stroke="#3d2a08" stroke-width="3"/></svg>
<div class="t b" style="left:3438px;top:333px;font-size:17.500px;line-height:20px;color:#111;letter-spacing:-.2px;transform:scaleY(.9)">启信宝</div>
<div class="t b" style="left:3490px;top:334px;font-size:4px;line-height:5px;color:#111">TM</div>
<div class="t" style="left:2250px;top:379px;font-size:15.400px;line-height:22px;color:#222">工商信息</div>
<div class="a" style="left:2250px;top:407px;width:61px;height:2px;background:#ffc60a"></div>
<div class="t" style="left:2355px;top:379px;font-size:15.400px;line-height:22px;color:#333">历史工商信息</div>
<div class="a" style="left:2355px;top:363px;width:36px;height:18px;border-radius:6px 6px 6px 0;background:linear-gradient(90deg,#d09f55,#e6c286)"></div>
<div class="t b" style="left:2355px;top:366px;width:36px;text-align:center;font-size:11.500px;line-height:12px;color:#fff;font-style:italic;font-family:'Liberation Sans',sans-serif">VIP</div>
<div class="a" style="left:3289px;top:374px;width:109px;height:35px;border:1px solid #d0d0d0;border-radius:4px;background:#fff"></div>
<svg style="left:3303px;top:384px" width="14" height="14" viewBox="0 0 14 14" fill="none" stroke="#333" stroke-width="1.200"><rect x=".7" y=".7" width="12.600" height="12.600" rx="2"/><path d="M4 5V3.800h6V5M7 3.800v6.500M5.500 10.300h3"/></svg>
<div class="t" style="left:3324px;top:380px;font-size:15.400px;line-height:22px;color:#333;letter-spacing:.2px">文字介绍</div>
<div class="a" style="left:3407px;top:374px;width:88px;height:35px;border:1px solid #d0d0d0;border-radius:4px;background:#fff"></div>
<svg style="left:3426px;top:384px" width="14" height="14" viewBox="0 0 14 14" fill="none" stroke="#333" stroke-width="1.200"><path d="M3.500 1H1v12h12V1h-2.500M7 .5v8M4 6l3 3 3-3"/></svg>
<div class="t" style="left:3447px;top:380px;font-size:15.400px;line-height:22px;color:#333">导出</div>
<!-- table -->
<div class="a" style="left:2250px;top:427px;width:1245px;height:609px;border-top:1px solid #e3ebf5;border-left:1px solid #e3ebf5;background:#fff"></div>
<div class="cl" style="left:2251px;top:428px;width:154px;height:84px;line-height:85px">统一社会信用代码</div>
<div class="cv" style="left:2405px;top:428px;width:262px;height:84px;line-height:85px"><span class="n">9122072131667014XD</span></div>
<div class="cl" style="left:2667px;top:428px;width:153px;height:84px;line-height:85px">企业名称</div>
<div class="cv" style="left:2820px;top:428px;width:675px;height:84px"></div>
<div class="t" style="left:2831px;top:443px;font-size:15.400px;line-height:23px;color:#333">吉林省天盛劳务有限公司</div>
<div class="a" style="left:2831px;top:473px;width:60px;height:23px;background:#f6f6f6;border:1px solid #e8e8e8;border-radius:2px"></div>
<div class="t" style="left:2841px;top:476px;font-size:13.200px;line-height:18px;color:#333">曾用名</div>
<div class="t" style="left:2895.500px;top:473px;font-size:15.400px;line-height:23px;color:#555">吉林省天盛劳务工程有限公司(<span class="n">2018</span>年<span class="n">07</span>月<span class="n">17</span>日至<span class="n">2024</span>年<span class="n">10</span>月<span class="n">22</span>日)</div>
<div class="t bl" style="left:3432px;top:473px;font-size:15.400px;line-height:23px">展开</div>
<svg style="left:3468px;top:480px" width="12" height="8" viewBox="0 0 12 8"><path d="M1 1l5 5 5-5" fill="none" stroke="#3870e0" stroke-width="1.700"/></svg>
<!-- row 2 -->
<div class="cl" style="left:2251px;top:512px;width:154px;height:108px;line-height:107px">法定代表人</div>
<div class="cv" style="left:2405px;top:512px;width:262px;height:108px"></div>
<div class="a" style="left:2416px;top:544px;width:44px;height:44px;border-radius:4px;background:#d7c083"></div>
<div class="t c" style="left:2416px;top:552px;width:44px;font-size:24px;line-height:28px;color:#fff">曹</div>
<div class="t bl" style="left:2473.500px;top:540px;font-size:15.400px;line-height:23px">曹凤江</div>
<div class="a" style="left:2473px;top:569px;width:85px;height:24px;border:1px solid #e8e8e8;border-radius:2px;background:#fff"></div>
<div class="t" style="left:2478px;top:572px;font-size:13.200px;line-height:18px;color:#555">关联企业 <span style="color:#ff8a1f">1</span></div>
<svg style="left:2549px;top:577px" width="5" height="8" viewBox="0 0 5 8"><path d="M0 0l5 4-5 4z" fill="#ff6a1a"/></svg>
<div class="a" style="left:2631px;top:555px;width:24px;height:24px;border:1px solid #ffc60a;border-radius:3px;background:#fffbea"></div>
<svg style="left:2637px;top:561px" width="12" height="12" viewBox="0 0 12 12" fill="none" stroke="#f57c00" stroke-width="1.500"><path d="M1 5.500V11h10V5.500M6 0v7.500M3.500 5L6 7.500 8.500 5"/></svg>
<div class="cl h54" style="left:2667px;top:512px;width:153px;line-height:56px">经营状态</div>
<div class="cv h54" style="left:2820px;top:512px;width:261px;line-height:56px">存续</div>
<div class="cl h54" style="left:3081px;top:512px;width:153px;line-height:56px">成立日期</div>
<div class="cv h54" style="left:3234px;top:512px;width:261px;line-height:56px"><span class="nd">2014-11-10</span></div>
<div class="a" style="left:3226px;top:519px;width:143px;height:38px;border:3px solid #c8161d"></div>
<div class="cl h54" style="left:2667px;top:566px;width:153px">注册资本</div>
<div class="cv h54" style="left:2820px;top:566px;width:261px"><span class="n">500</span> 万元</div>
<div class="cl h54" style="left:3081px;top:566px;width:153px">实缴资本</div>
<div class="cv h54" style="left:3234px;top:566px;width:261px"><span class="n">500</span> 万元</div>
<svg style="left:3313px;top:585px" width="15" height="15" viewBox="0 0 15 15" fill="none" stroke="#999" stroke-width="1.100"><circle cx="7.500" cy="7.500" r="6.800"/><path d="M5.300 5.800c0-1.500 1-2.300 2.200-2.300s2.200.8 2.200 2c0 1.500-2.200 1.800-2.200 3.500M7.500 10.500v1.300"/></svg>
<!-- row 3 -->
<div class="cl h54" style="left:2251px;top:620px;width:154px">组织机构代码</div>
<div class="cv h54" style="left:2405px;top:620px;width:262px"><span class="n">31667014X</span></div>
<div class="cl h54" style="left:2667px;top:620px;width:153px">工商注册号</div>
<div class="cv h54" style="left:2820px;top:620px;width:261px"><span class="n">220721000031887</span></div>
<div class="cl h54" style="left:3081px;top:620px;width:153px">纳税人识别号</div>
<div class="cv h54" style="left:3234px;top:620px;width:261px"><span class="n">9122072131667014XD</span></div>
<!-- row 4 -->
<div class="cl h54" style="left:2251px;top:674px;width:154px">进出口企业代码</div>
<div class="cv h54" style="left:2405px;top:674px;width:262px">-</div>
<div class="cl h54" style="left:2667px;top:674px;width:153px">海关注册编码</div>
<div class="cv h54" style="left:2820px;top:674px;width:261px">-</div>
<div class="cl h54" style="left:3081px;top:674px;width:153px">纳税人资质</div>
<div class="cv h54" style="left:3234px;top:674px;width:261px">增值税一般纳税人</div>
<!-- row 5 -->
<div class="cl" style="left:2251px;top:728px;width:154px;height:78px;line-height:77px">企业类型</div>
<div class="cv" style="left:2405px;top:728px;width:262px;height:78px;line-height:23.500px;padding-top:15px;letter-spacing:0">有限责任公司（自然人投资或控<br>股）</div>
<div class="cl" style="left:2667px;top:728px;width:153px;height:78px;line-height:77px">营业期限</div>
<div class="cv" style="left:2820px;top:728px;width:261px;height:78px;line-height:77px"><span class="nd">2014-11-10</span> 至 无固定期限</div>
<div class="cl" style="left:3081px;top:728px;width:153px;height:78px;line-height:77px">登记机关</div>
<div class="cv" style="left:3234px;top:728px;width:261px;height:78px;line-height:77px;letter-spacing:0">松原市市场监督管理局</div>
<!-- row 6 -->
<div class="cl" style="left:2251px;top:806px;width:154px;height:78px;line-height:77px">企业规模</div>
<div class="cv" style="left:2405px;top:806px;width:262px;height:78px;line-height:77px">小微</div>
<div class="cl" style="left:2667px;top:806px;width:153px;height:78px;line-height:77px">员工数量</div>
<div class="cv" style="left:2820px;top:806px;width:261px;height:78px;line-height:23.500px;padding-top:15px;letter-spacing:0"><span class="n">3</span>人<span class="bl">（<span class="n">2024</span>年工商年报社保人<br>数）</span></div>
<div class="cl" style="left:3081px;top:806px;width:153px;height:78px;line-height:77px">社保人数</div>
<div class="cv" style="left:3234px;top:806px;width:261px;height:78px;line-height:77px;letter-spacing:0"><span class="n">3</span> （<span class="bl n">2024</span><span class="bl">年报</span>）</div>
<div class="a" style="left:3455px;top:829px;width:29px;height:30px;border:1px solid #ffc60a;border-radius:3px;background:#fffbea"></div>
<svg style="left:3462px;top:837px" width="15" height="14" viewBox="0 0 15 14" fill="none" stroke="#f57c00" stroke-width="1.500"><path d="M1 0v13h14M3.500 8.500l3-3 2.500 2 4-3.500"/></svg>
<!-- row 7 -->
<div class="cl h54" style="left:2251px;top:884px;width:154px">所属行业</div>
<svg style="left:2329px;top:903px" width="15" height="15" viewBox="0 0 15 15" fill="none" stroke="#999" stroke-width="1.100"><circle cx="7.500" cy="7.500" r="6.800"/><path d="M5.300 5.800c0-1.500 1-2.300 2.200-2.300s2.200.8 2.200 2c0 1.500-2.200 1.800-2.200 3.500M7.500 10.500v1.300"/></svg>
<div class="cv h54" style="left:2405px;top:884px;width:262px;letter-spacing:0">其他专业咨询与调查（<span class="n">L7249</span>）</div>
<svg style="left:2629px;top:907px" width="11" height="7" viewBox="0 0 11 7"><path d="M1 1l4.500 4.500L10 1" fill="none" stroke="#999" stroke-width="1.300"/></svg>
<div class="cl h54" style="left:2667px;top:884px;width:153px">所属地区</div>
<div class="cv h54" style="left:2820px;top:884px;width:675px;letter-spacing:0">吉林省松原市宁江区 <span style="color:#555">（邮编：<span class="n">138000</span>)</span></div>
<!-- row 8 -->
<div class="cl h54" style="left:2251px;top:938px;width:154px">核准日期</div>
<div class="cv h54" style="left:2405px;top:938px;width:262px"><span class="nd">2024-11-12</span></div>
<div class="cl h54" style="left:2667px;top:938px;width:153px">英文名</div>
<div class="cv h54" style="left:2820px;top:938px;width:675px">-</div>
<!-- row 9 -->
<div class="cl h54" style="left:2251px;top:992px;width:154px">注册地址</div>
<div class="cv h54" style="left:2405px;top:992px;width:1090px;letter-spacing:0">吉林省松原市宁江区松原大路明珠花园<span class="n">101</span>幢<span class="n">114</span>号房</div>
<div class="a" style="left:2788px;top:1009px;width:74px;height:24px;border:1px solid #e8e8e8;border-radius:2px;background:#fff"></div>
<div class="t" style="left:2792px;top:1012px;font-size:13.200px;line-height:18px;color:#555">查看地图</div>
<svg style="left:2851px;top:1017px" width="5" height="8" viewBox="0 0 5 8"><path d="M0 0l5 4-5 4z" fill="#ff6a1a"/></svg>
<!-- sidebar -->
<div class="t b" style="left:3539px;top:231px;font-size:15.400px;line-height:22px;color:#333">基本信息</div>
<div class="a" style="left:3544px;top:280px;width:1px;height:528px;background:#e4e4e4"></div>
<div class="dt" style="top:272.9px;background:#ffc60a"></div>
<div class="si" style="top:265.4px;color:#ff8a1f">启信图谱</div>
<div class="dt" style="top:305.9px;background:#e6e6e6"></div>
<div class="si" style="top:298.4px">工商信息</div>
<div class="dt" style="top:338.9px;background:#e6e6e6"></div>
<div class="si" style="top:331.4px">股东信息 <b class="n">2</b></div>
<div class="dt" style="top:372.0px;background:#e6e6e6"></div>
<div class="si g" style="top:364.5px">间接股东</div>
<div class="dt" style="top:405.0px;background:#e6e6e6"></div>
<div class="si" style="top:397.5px">主要人员 <b class="n">1</b></div>
<div class="dt" style="top:438.0px;background:#e6e6e6"></div>
<div class="si g" style="top:430.5px">分支机构</div>
<div class="dt" style="top:471.0px;background:#e6e6e6"></div>
<div class="si" style="top:463.5px">变更记录 <b class="n">38</b></div>
<div class="dt" style="top:504.0px;background:#e6e6e6"></div>
<div class="si" style="top:496.5px">企业年报 <b class="n">11</b></div>
<div class="dt" style="top:537.1px;background:#e6e6e6"></div>
<div class="si" style="top:529.6px">社保人数</div>
<div class="dt" style="top:570.1px;background:#e6e6e6"></div>
<div class="si" style="top:562.6px">关联企业/人员</div>
<div class="dt" style="top:603.1px;background:#e6e6e6"></div>
<div class="si" style="top:595.6px">疑似实控人</div>
<div class="dt" style="top:636.1px;background:#e6e6e6"></div>
<div class="si" style="top:628.6px">受益所有人 <b class="n">1</b></div>
<div class="dt" style="top:669.1px;background:#e6e6e6"></div>
<div class="si g" style="top:661.6px">实际控制企业</div>
<div class="dt" style="top:702.2px;background:#e6e6e6"></div>
<div class="si g" style="top:694.7px">集团/族群</div>
<div class="dt" style="top:735.2px;background:#e6e6e6"></div>
<div class="si" style="top:727.7px">同业分析</div>
<div class="dt" style="top:768.2px;background:#e6e6e6"></div>
<div class="si g" style="top:760.7px">疑似关系</div>
<div class="dt" style="top:801.2px;background:#e6e6e6"></div>
<div class="si" style="top:793.7px">多证合一 <b class="n">1</b></div>
<!-- floating toolbar -->
<div class="a" style="left:3761px;top:477px;width:66px;height:450px;background:#fff;box-shadow:0 0 4px rgba(0,0,0,.06)"></div>
<div class="a" style="left:3741px;top:679px;width:21px;height:50px;background:#fff;border-radius:5px 0 0 5px"></div>
<svg style="left:3747px;top:698px" width="7" height="11" viewBox="0 0 7 11"><path d="M1 1l4.500 4.500L1 10" fill="none" stroke="#c0c0c0" stroke-width="1.300"/></svg>
<svg style="left:3780px;top:489px" width="28" height="28" viewBox="0 0 28 28" fill="none" stroke="#222" stroke-width="1.600"><circle cx="14" cy="14" r="13"/><path d="M14 17.500v-7a3.200 3.200 0 016.400 0c0 1.800-1.300 2.800-2.600 2.800M14 10.500v7a3.200 3.200 0 01-6.400 0c0-1.800 1.300-2.800 2.600-2.800" stroke-linecap="round"/></svg>
<div class="fl" style="top:526px">小程序</div>
<svg style="left:3784px;top:564px" width="21" height="29" viewBox="0 0 21 29"><rect x=".8" y=".8" width="19.400" height="27.400" rx="2.500" fill="#fff" stroke="#222" stroke-width="1.600"/><path d="M1 22h19v4.500a2 2 0 01-2 2H3a2 2 0 01-2-2z" fill="#222"/><circle cx="10.500" cy="25.300" r="1.300" fill="#fff"/><path d="M8 2.300h5" stroke="#222" stroke-width="1"/></svg>
<div class="fl" style="top:601px;letter-spacing:.3px">APP</div>
<svg style="left:3783px;top:642px" width="23" height="23" viewBox="0 0 23 23" fill="none" stroke="#222" stroke-width="1.700"><rect x="1" y="1" width="8" height="8"/><rect x="14" y="1" width="8" height="8"/><rect x="1" y="14" width="8" height="8"/><path d="M13.500 14h5.500v4M22 13v4M13.500 17v5M17.500 22v-1M21.500 20v2.500" /></svg>
<div class="fl" style="top:675px">微信</div>
<svg style="left:3781px;top:717px" width="26" height="24" viewBox="0 0 26 24"><path d="M2.500 1h21a1.500 1.500 0 011.500 1.500v13a1.500 1.500 0 01-1.500 1.500H11l-5 5.500V17H2.500A1.500 1.500 0 011 15.500v-13A1.500 1.500 0 012.500 1z" fill="none" stroke="#222" stroke-width="1.700" stroke-linejoin="round"/><circle cx="8" cy="9" r="1.400" fill="#222"/><circle cx="13" cy="9" r="1.400" fill="#222"/><circle cx="18" cy="9" r="1.400" fill="#222"/></svg>
<div class="fl" style="top:750px">反馈</div>
<svg style="left:3781px;top:789px" width="26" height="27" viewBox="0 0 26 27" fill="none" stroke="#222" stroke-width="1.700"><path d="M3.500 12.500V11a9.500 9.500 0 0119 0v4c0 5-4 8.500-9.500 9.500"/><rect x="1.500" y="11" width="4" height="7" rx="2"/><rect x="20.500" y="11" width="4" height="7" rx="2"/><circle cx="12" cy="24.500" r="2" fill="#222"/></svg>
<div class="fl" style="top:824px">客服中心</div>
<svg style="left:3782px;top:866px" width="24" height="24" viewBox="0 0 24 24" fill="none" stroke="#222" stroke-width="1.700" stroke-linejoin="round"><path d="M1.500 1h21"/><path d="M12 6l10 9.500h-5.500V23h-9v-7.500H2z"/></svg>
<div class="fl" style="top:899px">回到顶部</div>
<div class="a" style="left:3826px;top:119px;width:12px;height:917px;background:#fbfbfb"></div>
<div class="a" style="left:3827px;top:477px;width:1px;height:450px;background:#fff"></div>
<div class="a" style="left:3828.500px;top:208px;width:7px;height:68px;border-radius:4px;background:#c4c4c4"></div>
<div class="a" style="left:1918px;top:963px;width:66px;height:73px;background:linear-gradient(165deg,#f2492a 0%,#ef3a35 40%,#f01e5a 82%,#f01a60 100%)"></div>
<div class="a" style="left:1984px;top:963px;width:28px;height:73px;background:linear-gradient(180deg,#f3705a 0%,#f4546c 60%,#f5487a 100%)"></div>
<div class="t b" style="left:1924px;top:970px;width:54px;text-align:center;font-size:29px;line-height:30px;color:#fff4c4;font-style:italic;letter-spacing:-.5px;-webkit-text-stroke:.7px #fff4c4;font-family:'Liberation Sans',sans-serif">618</div>
<div class="t b" style="left:1925px;top:1001px;width:54px;text-align:center;font-size:25px;line-height:28px;color:#fff8e4;font-weight:900">钜惠</div>
<svg style="left:1993px;top:992px" width="10" height="18" viewBox="0 0 10 18"><path d="M1 1l8 8-8 8" fill="none" stroke="#fff" stroke-width="1.500"/></svg>
<!-- ================= WORD ================= -->
<div class="a" style="left:3838px;top:0;width:1082px;height:1036px;background:#e6e6e6"></div>
<div class="a" style="left:3838px;top:0;width:1082px;height:61.500px;background:#2b579a"></div>
<div class="a" style="left:3838px;top:61.500px;width:1082px;height:96px;background:#f3f3f3"></div>
<!-- QAT -->
<svg style="left:3860px;top:8px" width="14" height="14" viewBox="0 0 14 14" fill="none" stroke="#fff" stroke-width="1.400"><path d="M.7.700h12.600v12.600H.7z"/><path d="M3.500 1v4.500h7V1M3.500 13V9h7v4" stroke-width="1.200"/><rect x="7.500" y="10" width="1.800" height="3" fill="#fff" stroke="none"/></svg>
<svg style="left:3889px;top:9px" width="14" height="12" viewBox="0 0 14 12" fill="none" stroke="#6f8fc4" stroke-width="1.500"><path d="M5.500 1L1.500 5l4 4M1.500 5H8a4.500 4.500 0 014.500 4.500V11"/></svg>
<svg style="left:3910px;top:13px" width="6" height="4" viewBox="0 0 6 4"><path d="M.5.500L3 3 5.500.5" fill="none" stroke="#6f8fc4" stroke-width="1"/></svg>
<svg style="left:3927px;top:8px" width="15" height="14" viewBox="0 0 15 14" fill="none" stroke="#fff" stroke-width="1.600"><path d="M10.300 3.200A5.300 5.300 0 1 1 4.700 3.200"/><path d="M7.200 4h3.600V.4" stroke-width="1.500"/></svg>
<svg style="left:3959px;top:11px" width="8" height="8" viewBox="0 0 8 8"><path d="M0 .5h8" stroke="#fff" stroke-width="1.200"/><path d="M.5 3.500h7L4 7z" fill="#fff"/></svg>
<div class="t" style="left:4658.500px;top:7px;font-size:12.500px;line-height:16px;color:#9db3da;letter-spacing:-.05px">吉林天盛-注气站劳务服务-投标文件-标段1&nbsp; -&nbsp; Word</div>
<!-- tabs -->
<div class="a" style="left:3899px;top:32px;width:49px;height:29px;background:#f3f3f3"></div>
<div class="wt" style="left:3854.500px">文件</div>
<div class="wt" style="left:3910.500px;color:#2b579a">开始</div>
<div class="wt" style="left:3961.500px">插入</div>
<div class="wt" style="left:4012.500px">设计</div>
<div class="wt" style="left:4063.500px">布局</div>
<div class="wt" style="left:4114.500px">引用</div>
<div class="wt" style="left:4165.500px">邮件</div>
<div class="wt" style="left:4216.500px">审阅</div>
<div class="wt" style="left:4267.500px">视图</div>
<div class="wt" style="left:4318.500px">帮助</div>
<div class="wt" style="left:4369.500px;letter-spacing:.35px">Acrobat</div>
<svg style="left:4446px;top:38px" width="12" height="17" viewBox="0 0 12 17" fill="none" stroke="#fff" stroke-width="1.200"><path d="M3.500 11.500C3.500 9.500 1 8.500 1 5.500a5 5 0 0110 0c0 3-2.500 4-2.500 6z"/><path d="M3.800 13.500h4.400M4.300 15.500h3.400"/></svg>
<div class="wt b" style="left:4472px;font-weight:500">操作说明搜索</div>
<!-- clipboard group -->
<svg style="left:3855px;top:70px" width="29" height="31" viewBox="0 0 29 31"><rect x="0" y="3.500" width="24" height="25" rx="1" fill="#eec572"/><path d="M7 4V2.500h2.500a2.500 2.500 0 015 0H17V4l1 2.500H6z" fill="#7d7d7d"/><path d="M15.500 11.500h8l5 5V30.500h-13z" fill="#fff" stroke="#555" stroke-width="1"/><path d="M23.500 11.500v5h5" fill="none" stroke="#555" stroke-width="1"/></svg>
<div class="wl" style="left:3855px;top:102px;font-size:12.500px">粘贴</div>
<svg style="left:3864px;top:123px" width="7" height="4" viewBox="0 0 7 4"><path d="M.5.500l3 3 3-3" fill="none" stroke="#444" stroke-width="1.100"/></svg>
<svg style="left:3892px;top:68px" width="15" height="16" viewBox="0 0 15 16" fill="none"><path d="M3.500 0.500l6 10.500M11.500 .5L5.500 11" stroke="#555" stroke-width="1.300"/><circle cx="3.200" cy="13" r="2.400" stroke="#2b6cc4" stroke-width="1.300"/><circle cx="11.800" cy="13" r="2.400" stroke="#2b6cc4" stroke-width="1.300"/></svg>
<div class="wl" style="left:3910px;top:69px;font-size:12.500px">剪切</div>
<svg style="left:3891px;top:91px" width="16" height="16" viewBox="0 0 16 16" fill="#fff" stroke="#555" stroke-width="1"><path d="M.5 .5h6l2.500 2.500V11H.5z"/><path d="M6.500 5h6l3 3v7.500h-9z"/><path d="M2.500 4.500h3M2.500 6.500h3M8.500 9.500h5M8.500 11.500h5M8.500 13.500h5" stroke="#2b6cc4" stroke-width=".9"/></svg>
<div class="wl" style="left:3910px;top:92.500px;font-size:12.500px">复制</div>
<svg style="left:3891px;top:114px" width="17" height="16" viewBox="0 0 17 16"><path d="M9.500 5.500L14 1l2 2-4.500 4.500z" fill="#555"/><path d="M5.500 5l6 6-3 4.500L.5 9z" fill="#eec572"/><path d="M5.500 5l6 6" stroke="#555" stroke-width="1.600"/></svg>
<div class="wl" style="left:3910px;top:115px;font-size:12.500px">格式刷</div>
<div class="wl" style="left:3873px;top:138px;font-size:12.500px">剪贴板</div>
<svg style="left:3949px;top:144px" width="8" height="8" viewBox="0 0 8 8" fill="none" stroke="#555" stroke-width="1"><path d="M.5 3V.5H3M3 3l4 4M7 3.500V7H3.500"/></svg>
<div class="ws" style="left:3961px"></div>
<!-- font group -->
<div class="a" style="left:3969px;top:73px;width:107px;height:23px;background:#fff;border:1px solid #ababab"></div>
<div class="wl" style="left:3972px;top:76.500px;font-size:12.500px;color:#000">宋体</div>
<svg style="left:4065px;top:83px" width="6" height="4" viewBox="0 0 6 4"><path d="M0 0h6L3 3.500z" fill="#555"/></svg>
<div class="a" style="left:4078px;top:73px;width:47px;height:23px;background:#fff;border:1px solid #ababab"></div>
<div class="wl" style="left:4081px;top:76.500px;font-size:12.500px;color:#000">四号</div>
<svg style="left:4114px;top:83px" width="6" height="4" viewBox="0 0 6 4"><path d="M0 0h6L3 3.500z" fill="#555"/></svg>
<div class="wl" style="left:4134px;top:76px;font-size:14px;color:#444">A</div><svg style="left:4142px;top:77px" width="5" height="3" viewBox="0 0 5 3"><path d="M0 3h5L2.500 0z" fill="#2b6cc4"/></svg>
<div class="wl" style="left:4158px;top:78px;font-size:12px;color:#444">A</div><svg style="left:4165px;top:77px" width="5" height="3" viewBox="0 0 5 3"><path d="M0 0h5L2.500 3z" fill="#2b6cc4"/></svg>
<div class="ws2" style="left:4177px;top:73px"></div>
<div class="wl" style="left:4185px;top:76px;font-size:13.500px;color:#444">Aa</div><svg class="cr" style="left:4206px;top:83px" width="6" height="4" viewBox="0 0 6 4"><path d="M.5.500L3 3 5.500.5" fill="none" stroke="#444" stroke-width="1.100"/></svg>
<div class="ws2" style="left:4222px;top:73px"></div>
<div class="wl" style="left:4231px;top:74px;font-size:11px;color:#555">A</div><svg style="left:4233px;top:79px" width="14" height="13" viewBox="0 0 14 13"><path d="M8 .5l5.500 5.500-5 6.500H4L.5 8.500z" fill="#ee8f9b"/><path d="M3 6l5 5" stroke="#fff" stroke-width="1"/></svg>
<div class="wl" style="left:4255px;top:72px;font-size:9.500px;line-height:11px;color:#333;letter-spacing:-.2px">wén</div>
<div class="wl" style="left:4258px;top:82px;font-size:10px;line-height:11px;color:#2b6cc4;font-weight:bold">文</div>
<div class="a" style="left:4278px;top:76px;width:17px;height:17px;border:1px solid #2b6cc4;background:#fff"></div>
<div class="wl c" style="left:4278px;top:76.500px;width:17px;font-size:13px;color:#444">A</div>
<div class="a" style="left:3969px;top:104px;width:22px;height:23px;background:#c6c6c6;border:1px solid #a0a0a0"></div>
<div class="wl c b" style="left:3969px;top:107px;width:22px;font-size:12.500px;color:#444">B</div>
<div class="wl" style="left:4000px;top:107px;font-size:12.500px;color:#444;font-style:italic;font-family:'Liberation Serif',serif">I</div>
<div class="wl" style="left:4023px;top:107px;font-size:12.500px;color:#444;text-decoration:underline;font-weight:bold">U</div><svg class="cr" style="left:4042px;top:113px" width="6" height="4" viewBox="0 0 6 4"><path d="M.5.500L3 3 5.500.5" fill="none" stroke="#444" stroke-width="1.100"/></svg>
<div class="wl" style="left:4059px;top:108px;font-size:11px;color:#444;text-decoration:line-through">abc</div>
<div class="wl b" style="left:4084px;top:107px;font-size:12.500px;color:#444">x<span style="font-size:7px;color:#2b6cc4;vertical-align:-2px">2</span></div>
<div class="wl b" style="left:4108px;top:107px;font-size:12.500px;color:#444">x<span style="font-size:7px;color:#2b6cc4;vertical-align:6px">2</span></div>
<div class="ws2" style="left:4131px;top:104px"></div>
<div class="wl" style="left:4139px;top:105px;font-size:16px;line-height:18px;color:#fff;-webkit-text-stroke:1.200px #3c7bd0;font-weight:bold">A</div><svg class="cr" style="left:4158px;top:113px" width="6" height="4" viewBox="0 0 6 4"><path d="M.5.500L3 3 5.500.5" fill="none" stroke="#444" stroke-width="1.100"/></svg>
<div class="wl" style="left:4176px;top:103px;font-size:9.500px;color:#444">ab</div><svg style="left:4180px;top:106px" width="12" height="12" viewBox="0 0 12 12"><path d="M11.500 .5L4 8l-1.500 3" stroke="#555" stroke-width="2" fill="none"/></svg>
<div class="a" style="left:4176px;top:119px;width:16px;height:4px;background:#ffff00"></div><svg class="cr" style="left:4198px;top:113px" width="6" height="4" viewBox="0 0 6 4"><path d="M.5.500L3 3 5.500.5" fill="none" stroke="#444" stroke-width="1.100"/></svg>
<div class="wl c" style="left:4215px;top:104px;width:16px;font-size:14.500px;color:#444">A</div>
<div class="a" style="left:4215px;top:119px;width:16px;height:4px;background:#e81123"></div><svg class="cr" style="left:4237px;top:113px" width="6" height="4" viewBox="0 0 6 4"><path d="M.5.500L3 3 5.500.5" fill="none" stroke="#444" stroke-width="1.100"/></svg>
<div class="a" style="left:4255px;top:108px;width:14px;height:14px;background:#c0c0c0"></div>
<div class="wl c b" style="left:4255px;top:107px;width:14px;font-size:13px;color:#444">A</div>
<svg style="left:4278px;top:107px" width="17" height="17" viewBox="0 0 17 17"><circle cx="8.500" cy="8.500" r="7.800" fill="#fff" stroke="#555" stroke-width="1"/></svg>
<div class="wl c" style="left:4278px;top:108.500px;width:17px;font-size:9.500px;line-height:14px;color:#333">字</div>
<div class="wl" style="left:4112px;top:138px;font-size:12.500px">字体</div>
<svg style="left:4293px;top:144px" width="8" height="8" viewBox="0 0 8 8" fill="none" stroke="#555" stroke-width="1"><path d="M.5 3V.5H3M3 3l4 4M7 3.500V7H3.500"/></svg>
<div class="ws" style="left:4304px"></div>
<!-- paragraph group -->
<svg style="left:4316px;top:76px" width="16" height="16" viewBox="0 0 16 16"><path d="M6 2.500h10M6 8h10M6 13.500h10" fill="none" stroke="#555" stroke-width="1.100"/><circle cx="1.800" cy="2.500" r="1.500" fill="#2b6cc4"/><circle cx="1.800" cy="8" r="1.500" fill="#2b6cc4"/><circle cx="1.800" cy="13.500" r="1.500" fill="#2b6cc4"/></svg>
<svg style="left:4339px;top:83px" width="6" height="4" viewBox="0 0 6 4"><path d="M.5.500L3 3 5.500.5" fill="none" stroke="#444" stroke-width="1.100"/></svg>
<div class="a" style="left:4352px;top:73px;width:37px;height:23px;background:#c6c6c6;border:1px solid #a0a0a0"></div>
<svg style="left:4356px;top:76px" width="16" height="16" viewBox="0 0 16 16"><path d="M6 2.500h10M6 8h10M6 13.500h10" fill="none" stroke="#555" stroke-width="1.100"/></svg>
<div class="t" style="left:4355.500px;top:75px;font-size:6px;line-height:5.600px;color:#2b6cc4;white-space:pre;font-weight:bold">1
2
3</div>
<svg style="left:4377px;top:83px" width="6" height="4" viewBox="0 0 6 4"><path d="M.5.500L3 3 5.500.5" fill="none" stroke="#444" stroke-width="1.100"/></svg>
<svg style="left:4394px;top:76px" width="17" height="17" viewBox="0 0 17 17" fill="none" stroke="#555" stroke-width="1.100"><path d="M5 2h11M8 8h8M11 14h5"/><path d="M1 .5v3M3.500 7.500h2M7 13.500h1.500" stroke="#2b6cc4"/></svg>
<svg style="left:4415px;top:83px" width="6" height="4" viewBox="0 0 6 4"><path d="M.5.500L3 3 5.500.5" fill="none" stroke="#444" stroke-width="1.100"/></svg>
<div class="ws2" style="left:4431px;top:73px"></div>
<svg style="left:4439px;top:77px" width="16" height="14" viewBox="0 0 16 14" fill="none" stroke="#555" stroke-width="1.100"><path d="M0 .5h16M8 4.500h8M8 8.500h8M0 12.500h16"/><path d="M6 6.500H.8M3 4L.7 6.500 3 9" stroke="#2b6cc4" stroke-width="1.300"/></svg>
<svg style="left:4463px;top:77px" width="16" height="14" viewBox="0 0 16 14" fill="none" stroke="#555" stroke-width="1.100"><path d="M0 .5h16M8 4.500h8M8 8.500h8M0 12.500h16"/><path d="M0 6.500h5.200M3 4l2.300 2.500L3 9" stroke="#2b6cc4" stroke-width="1.300"/></svg>
<div class="ws2" style="left:4486px;top:73px"></div>
<div class="wl b" style="left:4496px;top:77px;font-size:14px;color:#444;transform:scaleX(1.150)">A</div>
<svg style="left:4494px;top:77px" width="17" height="6" viewBox="0 0 17 6" fill="none" stroke="#2b6cc4" stroke-width="1.200"><path d="M3 .5L.8 3 3 5.500M14 .5L16.200 3 14 5.500M1 3h3.500M12.500 3H16"/></svg>
<svg style="left:4515px;top:83px" width="6" height="4" viewBox="0 0 6 4"><path d="M.5.500L3 3 5.500.5" fill="none" stroke="#444" stroke-width="1.100"/></svg>
<div class="ws2" style="left:4531px;top:73px"></div>
<div class="t" style="left:4540px;top:75px;font-size:8.500px;line-height:8.500px;color:#2b6cc4;white-space:pre;font-weight:bold">A
<span style="color:#9b4fc4">Z</span></div>
<svg style="left:4549px;top:76px" width="7" height="16" viewBox="0 0 7 16" fill="none" stroke="#555" stroke-width="1.100"><path d="M3.500 0v15M.5 11.500l3 3.500 3-3.500"/></svg>
<div class="ws2" style="left:4562px;top:73px"></div>
<svg style="left:4572px;top:78px" width="12" height="13" viewBox="0 0 12 13" fill="none" stroke="#555" stroke-width="1.100"><path d="M10.500 0v5H4M6 2.500L3.500 5 6 7.500M1 8.500l3 2-3 2"/></svg>
<!-- row 2 -->
<svg style="left:4316px;top:109px" width="15" height="12" viewBox="0 0 15 12" fill="none" stroke="#555" stroke-width="1.100"><path d="M0 .5h15M0 4h10M0 7.500h15M0 11h10"/></svg>
<svg style="left:4340px;top:109px" width="15" height="12" viewBox="0 0 15 12" fill="none" stroke="#555" stroke-width="1.100"><path d="M0 .5h15M2.500 4h10M0 7.500h15M2.500 11h10"/></svg>
<svg style="left:4364px;top:109px" width="15" height="12" viewBox="0 0 15 12" fill="none" stroke="#555" stroke-width="1.100"><path d="M0 .5h15M5 4h10M0 7.500h15M5 11h10"/></svg>
<div class="a" style="left:4385px;top:104px;width:22px;height:23px;background:#c6c6c6;border:1px solid #a0a0a0"></div>
<svg style="left:4389px;top:109px" width="15" height="12" viewBox="0 0 15 12" fill="none" stroke="#555" stroke-width="1.100"><path d="M0 .5h15M0 4h15M0 7.500h15M0 11h15"/></svg>
<svg style="left:4412px;top:106px" width="16" height="17" viewBox="0 0 16 17" fill="none" stroke="#555" stroke-width="1"><path d="M2.500 6.500h11M2.500 9h11M2.500 11.500h11M2.500 14h11M2.500 16.500h11"/><path d="M.5 0v17M15.500 0v17M2 2.500h12M4 .5L2 2.500l2 2M12 .5l2 2-2 2" stroke="#2b6cc4" stroke-width="1.200"/></svg>
<div class="ws2" style="left:4435px;top:104px"></div>
<svg style="left:4443px;top:107px" width="15" height="16" viewBox="0 0 15 16" fill="none" stroke="#555" stroke-width="1.100"><path d="M7 2.500h8M7 8h8M7 13.500h8"/><path d="M3 .8v14.400M.5 3.500L3 .8l2.500 2.700M.5 12.500L3 15.200l2.500-2.700" stroke="#2b6cc4" stroke-width="1.200"/></svg>
<svg style="left:4463px;top:113px" width="6" height="4" viewBox="0 0 6 4"><path d="M.5.500L3 3 5.500.5" fill="none" stroke="#444" stroke-width="1.100"/></svg>
<div class="ws2" style="left:4480px;top:104px"></div>
<svg style="left:4488px;top:106px" width="17" height="17" viewBox="0 0 17 17"><path d="M6 1.500l6.500 6-5 4.500L2 7z" fill="#fff" stroke="#555" stroke-width="1.100"/><path d="M6 1.500V7" stroke="#555" stroke-width="1.100"/><path d="M13 8c1.500 2 2 3 2 3.800a1.600 1.600 0 01-3.200 0C11.800 11 12.200 10 13 8z" fill="#2b6cc4"/><rect x="1" y="13.500" width="14.500" height="3" fill="#fff" stroke="#999" stroke-width=".8"/></svg>
<svg style="left:4510px;top:113px" width="6" height="4" viewBox="0 0 6 4"><path d="M.5.500L3 3 5.500.5" fill="none" stroke="#444" stroke-width="1.100"/></svg>
<svg style="left:4527px;top:107px" width="15" height="15" viewBox="0 0 15 15" fill="none" stroke="#777" stroke-width="1" stroke-dasharray="1 1"><path d="M.5.500h14v14H.5zM7.500.5v14M.5 7.500h14"/></svg>
<svg style="left:4549px;top:113px" width="6" height="4" viewBox="0 0 6 4"><path d="M.5.500L3 3 5.500.5" fill="none" stroke="#444" stroke-width="1.100"/></svg>
<div class="wl" style="left:4430px;top:138px;font-size:12.500px">段落</div>
<svg style="left:4585px;top:144px" width="8" height="8" viewBox="0 0 8 8" fill="none" stroke="#555" stroke-width="1"><path d="M.5 3V.5H3M3 3l4 4M7 3.500V7H3.500"/></svg>
<div class="ws" style="left:4596px"></div>
<!-- styles gallery -->
<div class="a" style="left:4606px;top:68px;width:320px;height:60px;background:#fff;border:1px solid #d2d2d2"></div>
<div class="sg" style="left:4614.500px;font-size:13.500px;letter-spacing:-.2px">AaBbCcDd</div>
<div class="sgl" style="left:4608px"><span class="pm" style="font-size:8px">↲</span> 表内列...</div>
<div class="sg" style="left:4686.500px;font-family:'Liberation Mono',monospace;font-size:11.800px;letter-spacing:-.6px;transform:scaleY(1.100)">AaBbCcDdE</div>
<div class="sgl" style="left:4680px">表内正文</div>
<div class="sg" style="left:4758.500px;font-size:11.200px;color:#1f3f8f">AaBbCcDdE</div>
<div class="sgl" style="left:4752px"><span class="pm" style="font-size:8px">↲</span> 表内正...</div>
<div class="sg" style="left:4830.500px;font-family:'Liberation Mono',monospace;font-size:11.800px;letter-spacing:-.6px;transform:scaleY(1.100)">AaBbCcDdE</div>
<div class="sgl" style="left:4824px"><span class="pm" style="font-size:8px">↲</span> 正文</div>
<div class="sg" style="left:4902.500px;font-family:'Liberation Mono',monospace;font-size:11.800px;letter-spacing:-.6px;transform:scaleY(1.100)">AaBbCcDdE</div>
<div class="sgl" style="left:4896px;text-align:left;padding-left:5px"><span class="pm" style="font-size:8px">↲</span> Table</div>
<!-- yellow bar -->
<div class="a" style="left:3838px;top:156.500px;width:1082px;height:30px;background:#fcf7b6;border-top:1.500px solid #e6c54d;border-bottom:1.500px solid #d6bb55"></div>
<svg style="left:3847px;top:161px" width="21" height="21" viewBox="0 0 21 21"><circle cx="10.500" cy="10.500" r="10.500" fill="#2f6db5"/><rect x="9.200" y="8.500" width="2.600" height="8" fill="#fff"/><circle cx="10.500" cy="5.300" r="1.600" fill="#fff"/></svg>
<div class="t b" style="left:3878px;top:164px;font-size:12.500px;line-height:16px;color:#262626;letter-spacing:.1px">获取正版 OFFICE</div>
<div class="t" style="left:3983.500px;top:164px;font-size:12.500px;line-height:16px;color:#262626;letter-spacing:-.34px">你的许可证并非正版，你可能是盗版软件的受害者。立即通过正版 Office 避免中断并使文件保持安全。</div>
<div class="a" style="left:4539.500px;top:160.500px;width:119px;height:22.500px;background:#fff;border:1px solid #ababab"></div>
<div class="t c" style="left:4539.500px;top:164px;width:119px;font-size:12.500px;line-height:16px;color:#262626">获取正版 Office</div>
<div class="a" style="left:4668px;top:160.500px;width:106px;height:22.500px;background:#fff;border:1px solid #ababab"></div>
<div class="t c" style="left:4668px;top:164px;width:106px;font-size:12.500px;line-height:16px;color:#262626">了解详细信息</div>
<!-- doc area -->
<div class="a" style="left:4111px;top:190px;width:23px;height:22px;background:#fff;border:2px solid #efefef"></div>
<svg style="left:4119px;top:197px" width="7" height="7" viewBox="0 0 7 7"><path d="M1 0v6h6" fill="none" stroke="#555" stroke-width="1.700"/></svg>
<div class="a" style="left:4220px;top:192.500px;width:700px;height:15.500px;background:#fff"></div>
<div class="a" style="left:4220px;top:192.500px;width:84px;height:15.500px;background:#c6c6c6"></div>
<div class="a" style="left:4845px;top:192.500px;width:75px;height:15.500px;background:#c6c6c6"></div>
<div class="rn" style="left:4219.2px">6</div>
<div class="rn" style="left:4244.2px">4</div>
<div class="rn" style="left:4269.2px">2</div>
<div class="rn" style="left:4319.2px">2</div>
<div class="rn" style="left:4344.2px">4</div>
<div class="rn" style="left:4369.2px">6</div>
<div class="rn" style="left:4394.2px">8</div>
<div class="rn" style="left:4419.2px">10</div>
<div class="rn" style="left:4444.2px">12</div>
<div class="rn" style="left:4469.2px">14</div>
<div class="rn" style="left:4494.2px">16</div>
<div class="rn" style="left:4519.2px">18</div>
<div class="rn" style="left:4544.2px">20</div>
<div class="rn" style="left:4569.2px">22</div>
<div class="rn" style="left:4594.2px">24</div>
<div class="rn" style="left:4619.2px">26</div>
<div class="rn" style="left:4644.2px">28</div>
<div class="rn" style="left:4669.2px">30</div>
<div class="rn" style="left:4694.2px">32</div>
<div class="rn" style="left:4719.2px">34</div>
<div class="rn" style="left:4744.2px">36</div>
<div class="rn" style="left:4769.2px">38</div>
<div class="rn" style="left:4794.2px">40</div>
<div class="rn" style="left:4819.2px">42</div>
<div class="rn" style="left:4844.2px">44</div>
<div class="rn" style="left:4869.2px">46</div>
<div class="rn" style="left:4894.2px">48</div>
<svg style="left:4299px;top:189.500px" width="11" height="10" viewBox="0 0 11 10"><path d="M.5.500h10v4L5.500 9.500.5 4.500z" fill="#fff" stroke="#777" stroke-width="1"/></svg>
<svg style="left:4351px;top:201px" width="11" height="16" viewBox="0 0 11 16"><path d="M.5 9.500v-4L5.500.5l5 5v4zM.5 9.500h10v6H.5z" fill="#fff" stroke="#777" stroke-width="1"/></svg>
<svg style="left:4840px;top:201px" width="11" height="10" viewBox="0 0 11 10"><path d="M.5 9.500v-4L5.500.5l5 5v4z" fill="#fff" stroke="#777" stroke-width="1"/></svg>
<div class="a" style="left:4221px;top:217px;width:705px;height:151px;background:#fff;border:1px solid #c6c6c6;border-top:0"></div>
<div class="a" style="left:4221px;top:381px;width:705px;height:637px;background:#fff;border:1px solid #c6c6c6"></div>
<div class="a" style="left:4285px;top:282.500px;width:21px;height:21px;border-top:1px solid #a6a6a6;border-right:1px solid #a6a6a6"></div>
<div class="a" style="left:4847px;top:282.500px;width:21px;height:21px;border-top:1px solid #a6a6a6;border-left:1px solid #a6a6a6"></div>
<div class="t pm" style="left:4571px;top:297px;font-size:9.500px;line-height:10px;color:#777">29↵</div>
<div class="a" style="left:4114px;top:380px;width:17px;height:637px;background:#fff"></div>
<div class="a" style="left:4114px;top:380px;width:17px;height:86px;background:#c6c6c6"></div>
<div class="vr" style="top:385.2px">4</div>
<div class="a" style="left:4120px;top:400.0px;width:5px;height:1px;background:#555"></div>
<div class="a" style="left:4120px;top:418.6px;width:5px;height:1px;background:#555"></div>
<div class="vr" style="top:422.3px">2</div>
<div class="a" style="left:4120px;top:437.1px;width:5px;height:1px;background:#555"></div>
<div class="a" style="left:4120px;top:455.7px;width:5px;height:1px;background:#555"></div>
<div class="a" style="left:4120px;top:474.3px;width:5px;height:1px;background:#555"></div>
<div class="a" style="left:4120px;top:492.9px;width:5px;height:1px;background:#555"></div>
<div class="vr" style="top:496.7px">2</div>
<div class="a" style="left:4120px;top:511.4px;width:5px;height:1px;background:#555"></div>
<div class="a" style="left:4120px;top:530.0px;width:5px;height:1px;background:#555"></div>
<div class="vr" style="top:533.8px">4</div>
<div class="a" style="left:4120px;top:548.6px;width:5px;height:1px;background:#555"></div>
<div class="a" style="left:4120px;top:567.2px;width:5px;height:1px;background:#555"></div>
<div class="vr" style="top:571.0px">6</div>
<div class="a" style="left:4120px;top:585.8px;width:5px;height:1px;background:#555"></div>
<div class="a" style="left:4120px;top:604.4px;width:5px;height:1px;background:#555"></div>
<div class="vr" style="top:608.1px">8</div>
<div class="a" style="left:4120px;top:622.9px;width:5px;height:1px;background:#555"></div>
<div class="a" style="left:4120px;top:641.5px;width:5px;height:1px;background:#555"></div>
<div class="vr" style="top:645.3px">10</div>
<div class="a" style="left:4120px;top:660.1px;width:5px;height:1px;background:#555"></div>
<div class="a" style="left:4120px;top:678.7px;width:5px;height:1px;background:#555"></div>
<div class="vr" style="top:682.5px">12</div>
<div class="a" style="left:4120px;top:697.2px;width:5px;height:1px;background:#555"></div>
<div class="a" style="left:4120px;top:715.8px;width:5px;height:1px;background:#555"></div>
<div class="vr" style="top:719.6px">14</div>
<div class="a" style="left:4120px;top:734.4px;width:5px;height:1px;background:#555"></div>
<div class="a" style="left:4120px;top:753.0px;width:5px;height:1px;background:#555"></div>
<div class="vr" style="top:756.8px">16</div>
<div class="a" style="left:4120px;top:771.6px;width:5px;height:1px;background:#555"></div>
<div class="a" style="left:4120px;top:790.1px;width:5px;height:1px;background:#555"></div>
<div class="vr" style="top:793.9px">18</div>
<div class="a" style="left:4120px;top:808.7px;width:5px;height:1px;background:#555"></div>
<div class="a" style="left:4120px;top:827.3px;width:5px;height:1px;background:#555"></div>
<div class="vr" style="top:831.1px">20</div>
<div class="a" style="left:4120px;top:845.9px;width:5px;height:1px;background:#555"></div>
<div class="a" style="left:4120px;top:864.5px;width:5px;height:1px;background:#555"></div>
<div class="vr" style="top:868.3px">22</div>
<div class="a" style="left:4120px;top:883.0px;width:5px;height:1px;background:#555"></div>
<div class="a" style="left:4120px;top:901.6px;width:5px;height:1px;background:#555"></div>
<div class="vr" style="top:905.4px">24</div>
<div class="a" style="left:4120px;top:920.2px;width:5px;height:1px;background:#555"></div>
<div class="a" style="left:4120px;top:938.8px;width:5px;height:1px;background:#555"></div>
<div class="vr" style="top:942.6px">26</div>
<div class="a" style="left:4120px;top:957.4px;width:5px;height:1px;background:#555"></div>
<div class="a" style="left:4120px;top:975.9px;width:5px;height:1px;background:#555"></div>
<div class="vr" style="top:979.7px">28</div>
<div class="a" style="left:4120px;top:994.5px;width:5px;height:1px;background:#555"></div>
<div class="a" style="left:4120px;top:1013.1px;width:5px;height:1px;background:#555"></div>
<div class="dl b" style="left:4306.500px;top:417.500px;font-size:12.500px;color:#6a6a6a;letter-spacing:0">吉林省天盛劳务有限公司<span class="pm" style="font-weight:normal">↵</span></div>
<div class="dl b" style="left:4306.500px;top:433.500px;font-size:12.300px;color:#6a6a6a;letter-spacing:.22px">塔里木地面工程库车注气站项目劳务服务–投标文件<span class="pm" style="font-weight:normal">↵</span></div>
<div class="a" style="left:4306px;top:449.500px;width:543px;height:1px;background:#8a8a8a"></div>
<div class="a" style="left:4285px;top:445px;width:21px;height:19.500px;border-bottom:1px solid #a6a6a6;border-right:1px solid #a6a6a6"></div>
<div class="a" style="left:4847px;top:445px;width:21px;height:19.500px;border-bottom:1px solid #a6a6a6;border-left:1px solid #a6a6a6"></div>
<div class="a" style="left:4298px;top:480px;width:4px;height:4px;background:#000"></div>
<div class="dl b" style="left:4306.500px;top:465px;font-size:16.300px;line-height:22px;letter-spacing:0"><span style="letter-spacing:2.100px;font-family:'Liberation Serif','Noto Serif CJK SC',serif">2.4.2</span>&nbsp;&nbsp;&thinsp;拟投入的人员<span class="pm" style="font-weight:normal;font-size:11px">↵</span></div>
<div class="dl" style="left:4332px;top:498.4px">1</div>
<div class="dl" style="left:4357px;top:498.4px">公司概况<span class="pm">↵</span></div>
<div class="dl" style="left:4332px;top:522.4px">1.1</div>
<div class="dl" style="left:4357px;top:522.4px">公司背景<span class="pm">↵</span></div>
<div class="dj" style="left:4332px;width:171px;top:546.7px">吉林省天盛劳务有限公司成立于</div>
<div class="dl" style="left:4514.5px;top:546.7px">2014</div>
<div class="dl" style="left:4548px;top:546.7px">年</div>
<div class="dl" style="left:4567px;top:546.7px">03</div>
<div class="dl" style="left:4588.500px;top:546.7px">月</div>
<div class="dl" style="left:4608px;top:546.7px">17</div>
<div class="dl" style="left:4629px;top:546.7px">日，</div>
<div class="dj" style="left:4654.5px;width:108px;top:546.7px">位于吉林省松原市，</div>
<div class="dj" style="left:4773px;width:74px;top:546.7px">公司营业项目</div>
<div class="a" style="left:4499.500px;top:541.500px;width:152.500px;height:30px;border:3px solid #c8161d"></div>
<div class="dj" style="left:4307px;width:540px;top:571.3px">为：建设工程施工；建筑劳务分包；电气安装服务。劳务服务（不含劳务派遣）；小微型客车租赁经</div>
<div class="dj" style="left:4307px;width:222px;top:596.3px">营服务；租赁服务（不含许可类租赁服务）；</div>
<div class="dj" style="left:4558px;width:289px;top:596.3px">建筑工程机械与设备租赁；土石方工程施工；园林绿</div>
<div class="dl" style="left:4307px;top:620.2px;letter-spacing:.25px">化工程施工。 <span class="pm">↵</span></div>
<div class="dl" style="left:4332px;top:644.7px">1.2</div>
<div class="dl" style="left:4357px;top:644.7px">公司使命<span class="pm">↵</span></div>
<div class="dj" style="left:4332px;width:515px;top:669.2px">我们的使命是为客户提供高效、可靠劳务服务，设备维修服务，机械与设备租赁服务，帮助他</div>
<div class="dl" style="left:4307px;top:693.1px;letter-spacing:.25px">们实现项目的顺利进行并提高工作效率。 <span class="pm">↵</span></div>
<div class="dl" style="left:4332px;top:717.7px">1.3</div>
<div class="dl" style="left:4357px;top:717.7px">公司价值观<span class="pm">↵</span></div>
<div class="dj" style="left:4332px;width:381px;top:741.5px">我们秉承诚信、专业、创新、共赢的价值观，致力于成为行业的领导者，</div>
<div class="dj" style="left:4736px;width:111px;top:741.5px">为客户创造更大的价</div>
<div class="dl" style="left:4307px;top:766.1px">值。 <span class="pm">↵</span></div>
<div class="dl" style="left:4332px;top:790.3px">2</div>
<div class="dl" style="left:4356px;top:790.3px">拟投入的人员<span class="pm">↵</span></div>
<div class="dj" style="left:4332px;width:515px;top:814.7px">我们公司拥有一支经验丰富的技术团队，他们具备专业的设备操作技能和维护知识，能够提供</div>
<div class="dl" style="left:4307px;top:839.3px;letter-spacing:.25px">全方位的服务。 <span class="pm">↵</span></div>
<div class="dl" style="left:4478px;top:867.7px"><span class="pm">↵</span></div>
<!-- nav pane -->
<div class="a" style="left:4108px;top:188px;width:1px;height:830px;background:#c8c8c8"></div>
<div class="t" style="left:3852px;top:201px;font-size:21px;line-height:26px;color:#262626">导航</div>
<svg style="left:4037px;top:206px" width="14" height="8" viewBox="0 0 14 8"><path d="M.5.500l6.500 6.500 6.500-6.500" fill="none" stroke="#444" stroke-width="1.200"/></svg>
<svg style="left:4079px;top:204px" width="11" height="11" viewBox="0 0 11 11"><path d="M.5.500l10 10M10.500.5l-10 10" fill="none" stroke="#444" stroke-width="1.200"/></svg>
<div class="a" style="left:3852px;top:243px;width:238px;height:26px;background:#fff;border:1px solid #ababab"></div>
<div class="t" style="left:3859px;top:248px;font-size:12px;line-height:16px;color:#666">在文档中搜索</div>
<svg style="left:4063px;top:248px" width="14" height="15" viewBox="0 0 14 15" fill="none" stroke="#2b579a" stroke-width="2"><circle cx="8.500" cy="5.500" r="4.200"/><path d="M5.500 8.500L1 13.500" stroke-width="2.400"/></svg>
<svg style="left:4081px;top:255px" width="6" height="4" viewBox="0 0 6 4"><path d="M.5.500L3 3 5.500.5" fill="none" stroke="#444" stroke-width="1.100"/></svg>
<div class="t b" style="left:3852.500px;top:287px;font-size:12.500px;line-height:16px;color:#2b579a">标题</div>
<div class="a" style="left:3852px;top:308px;width:26px;height:3px;background:#2b579a"></div>
<div class="t" style="left:3901.500px;top:287px;font-size:12.500px;line-height:16px;color:#444">页面</div>
<div class="t" style="left:3950.500px;top:287px;font-size:12.500px;line-height:16px;color:#444">结果</div>
<div class="a" style="left:3916px;top:568px;width:161px;height:20px;background:#c5d6f3"></div>
<div class="a" style="left:3838px;top:300px;width:270px;height:700px;overflow:hidden">
<div class="nt" style="left:99px;top:18.7px">1.2.3.1 查询截图</div>
<div class="nt" style="left:83px;top:39.7px">1.2.4 环境管理体系认证证书</div>
<svg style="left:67px;top:44.7px" width="7" height="7" viewBox="0 0 7 7"><path d="M6.500 0v6.500H0z" fill="#444"/></svg>
<div class="nt" style="left:99px;top:60.7px">1.2.4.1 查询截图</div>
<div class="nt" style="left:83px;top:81.7px">1.2.5 职业健康安全管理体...</div>
<svg style="left:67px;top:86.7px" width="7" height="7" viewBox="0 0 7 7"><path d="M6.500 0v6.500H0z" fill="#444"/></svg>
<div class="nt" style="left:99px;top:102.7px">1.2.5.1 查询截图</div>
<div class="nt" style="left:83px;top:123.7px">1.2.6 基本存款账户信息</div>
<div class="nt" style="left:51px;top:144.7px">2 服务方案</div>
<svg style="left:35px;top:149.7px" width="7" height="7" viewBox="0 0 7 7"><path d="M6.500 0v6.500H0z" fill="#444"/></svg>
<div class="nt" style="left:67px;top:165.7px">2.1 项目内容</div>
<div class="nt" style="left:67px;top:186.7px">2.2 项目工作目标</div>
<div class="nt" style="left:67px;top:207.7px">2.3 项目机构设置（框图）、...</div>
<div class="nt" style="left:67px;top:228.7px">2.4 项目服务方案</div>
<svg style="left:51px;top:233.7px" width="7" height="7" viewBox="0 0 7 7"><path d="M6.500 0v6.500H0z" fill="#444"/></svg>
<div class="nt" style="left:83px;top:249.7px">2.4.1 总体实施方案</div>
<div class="nt" style="left:83px;top:270.7px">2.4.2 拟投入的人员</div>
<div class="nt" style="left:67px;top:291.7px">2.5 服务保障措施</div>
<div class="nt" style="left:67px;top:312.7px">2.6 工作重点、难点分析</div>
<div class="nt" style="left:67px;top:333.7px">2.7 服务期、质量承诺及措施</div>
<div class="nt" style="left:67px;top:354.7px">2.8 合理化建议</div>
<div class="nt" style="left:51px;top:375.7px">3 技术服务承诺（主要说明服务...</div>
<svg style="left:35px;top:380.7px" width="7" height="7" viewBox="0 0 7 7"><path d="M6.500 0v6.500H0z" fill="#444"/></svg>
<div class="nt" style="left:67px;top:396.7px">3.1 第五章&nbsp; 技术标准和要求</div>
<div class="nt" style="left:51px;top:417.7px">4 其他</div>
<svg style="left:35px;top:422.7px" width="7" height="7" viewBox="0 0 7 7"><path d="M6.500 0v6.500H0z" fill="#444"/></svg>
<div class="nt" style="left:67px;top:438.7px">4.1 第四章&nbsp; 招标说明及资料...</div>
<svg style="left:51px;top:443.7px" width="7" height="7" viewBox="0 0 7 7"><path d="M6.500 0v6.500H0z" fill="#444"/></svg>
<div class="nt" style="left:83px;top:459.7px">4.1.1 中标后、服务前及时...</div>
<div class="nt" style="left:67px;top:480.7px">4.2 第六章&nbsp; QHSE管理要求</div>
<div class="nt" style="left:67px;top:501.7px">4.3 第八章&nbsp; 合同条款及格式</div>
<div class="nt" style="left:35px;top:522.7px">六、 资格审查资料</div>
<svg style="left:19px;top:527.7px" width="7" height="7" viewBox="0 0 7 7"><path d="M6.500 0v6.500H0z" fill="#444"/></svg>
<div class="nt" style="left:51px;top:543.7px">1 公司概况</div>
<svg style="left:35px;top:548.7px" width="7" height="7" viewBox="0 0 7 7"><path d="M6.500 0v6.500H0z" fill="#444"/></svg>
<div class="nt" style="left:67px;top:564.7px">1.1 投标人基本情况表</div>
<svg style="left:51px;top:569.7px" width="7" height="7" viewBox="0 0 7 7"><path d="M6.500 0v6.500H0z" fill="#444"/></svg>
<div class="nt" style="left:83px;top:585.7px">1.1.1 企业法人资格</div>
<div class="nt" style="left:83px;top:606.7px">1.1.2 营业执照</div>
<svg style="left:67px;top:611.7px" width="7" height="7" viewBox="0 0 7 7"><path d="M6.500 0v6.500H0z" fill="#444"/></svg>
<div class="nt" style="left:99px;top:627.7px">1.1.2.1 变更证明</div>
<div class="nt" style="left:83px;top:648.7px">1.1.3 劳务派遣经营许可证</div>
<div class="nt" style="left:83px;top:669.7px">1.1.4 质量管理体系认证证书</div>
<div class="nt" style="left:83px;top:690.7px">1.1.5 环境管理体系认证证书</div>
</div>
<!-- status bar -->
<div class="a" style="left:3838px;top:1016px;width:1082px;height:20px;background:#f3f3f3;border-top:1px solid #c8c8c8"></div>
<div class="st" style="left:3850px">第 31 页，共 329 页</div>
<div class="st" style="left:3980px">7/33362 个字</div>
<svg style="left:4073px;top:1020px" width="15" height="13" viewBox="0 0 15 13" fill="none" stroke="#555" stroke-width="1"><path d="M.5 1.500h5.500v10H.5zM6 1.500c1-1 2-1 3 0v10c-1-1-2-1-3 0"/><path d="M10.500 3l3.500 4M14 3l-3.500 4" /></svg>
<div class="st" style="left:4106px;letter-spacing:-.1px">简体中文(中国大陆)</div>
<div class="st" style="left:4227px">修订: 关闭</div>
<svg style="left:4301px;top:1020px" width="16" height="14" viewBox="0 0 16 14" fill="none" stroke="#555" stroke-width="1.200"><circle cx="6" cy="2" r="1.500"/><path d="M2 5h8M6 5v4M6 9l-2.500 4M6 9l2.500 4M10 8l5 5M15 8l-5 5"/></svg>
<div class="st b" style="left:4321px">辅助功能: 调查</div>
</body>
</html>
